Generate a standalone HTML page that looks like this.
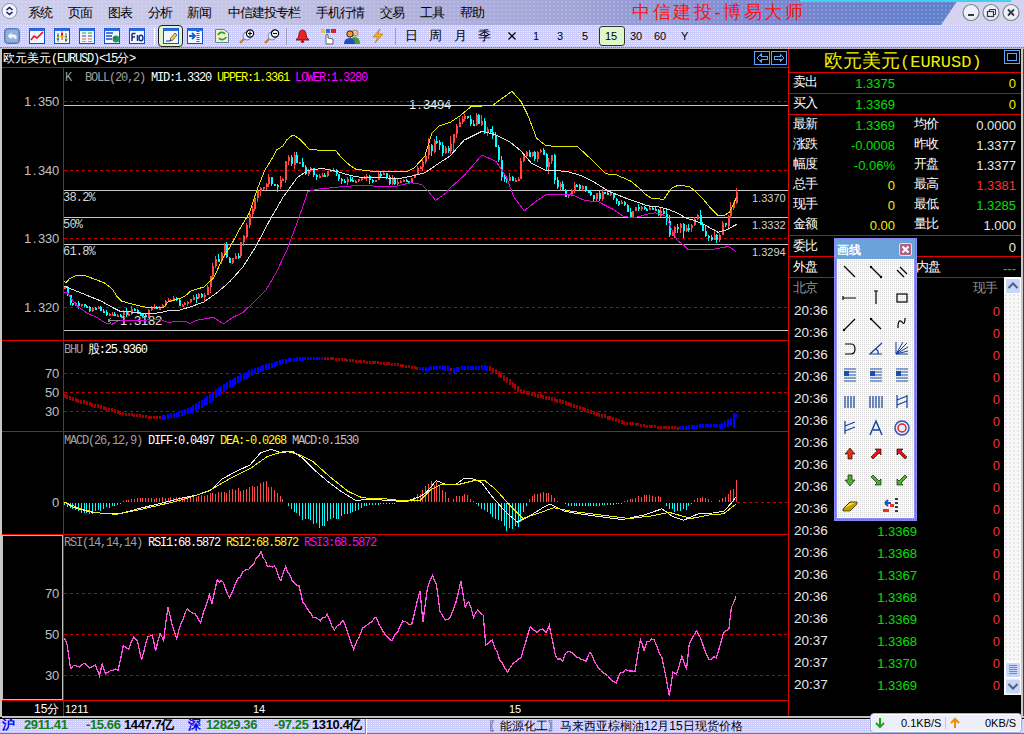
<!DOCTYPE html><html><head><meta charset="utf-8"><style>
*{margin:0;padding:0;box-sizing:border-box}
html,body{width:1024px;height:734px;overflow:hidden;background:#000;font-family:"Liberation Sans",sans-serif}
.a{position:absolute;white-space:nowrap;line-height:1}
.m{font-family:"Liberation Mono",monospace;font-size:12px;letter-spacing:-1.2px}
.s{font-family:"Liberation Sans",sans-serif}
</style></head><body><div class="a" style="left:0;top:0;width:1024px;height:25px;background:linear-gradient(90deg,#cdcdec 0px,#c4c4e6 250px,#b0b0dc 420px,#a0a4d6 576px,#7c88d0 760px,#6680cc 900px,#6080cc 960px)"></div>
<div class="a" style="left:0;top:0;width:1024px;height:25px;background-image:radial-gradient(circle,rgba(255,255,255,.35) 0.6px,transparent 0.9px);background-size:4px 4px;opacity:.7"></div>
<svg class="a" style="left:0;top:0" width="1024" height="25"><polygon points="958,0 1024,0 1024,25 941,25" fill="#d4d4f0"/><rect x="800" y="0" width="211" height="2" fill="#40d0f0"/></svg>
<div class="a" style="left:0;top:25px;width:1024px;height:22px;background:conic-gradient(from 90deg at 1px 1px,#cccccc 0 25%,#ccccff 0 75%,#ccffee 0) 0 0/2px 2px"></div>
<div class="a" style="left:0;top:47px;width:1024px;height:2px;background:#b8b8b8;border-top:1px dotted #808080"></div>
<div class="a" style="left:28px;top:6px;font-size:13px;letter-spacing:-1px;color:#000">系统</div>
<div class="a" style="left:68px;top:6px;font-size:13px;letter-spacing:-1px;color:#000">页面</div>
<div class="a" style="left:108px;top:6px;font-size:13px;letter-spacing:-1px;color:#000">图表</div>
<div class="a" style="left:148px;top:6px;font-size:13px;letter-spacing:-1px;color:#000">分析</div>
<div class="a" style="left:187px;top:6px;font-size:13px;letter-spacing:-1px;color:#000">新闻</div>
<div class="a" style="left:228px;top:6px;font-size:13px;letter-spacing:-1px;color:#000">中信建投专栏</div>
<div class="a" style="left:316px;top:6px;font-size:13px;letter-spacing:-1px;color:#000">手机行情</div>
<div class="a" style="left:380px;top:6px;font-size:13px;letter-spacing:-1px;color:#000">交易</div>
<div class="a" style="left:420px;top:6px;font-size:13px;letter-spacing:-1px;color:#000">工具</div>
<div class="a" style="left:460px;top:6px;font-size:13px;letter-spacing:-1px;color:#000">帮助</div>
<svg class="a" style="left:0;top:0" width="24" height="24"><circle cx="9.5" cy="11" r="7.5" fill="#f4f4ff" stroke="#8890a8" stroke-width="1"/><path d="M6.5 10 L9.5 7.5 L12.5 10 M6.5 12 L9.5 14.5 L12.5 12" fill="none" stroke="#102060" stroke-width="1.6"/></svg>
<div class="a" style="left:632px;top:3px;font-size:18px;color:#ff1010;letter-spacing:2.6px;font-family:'Liberation Serif',serif">中信建投-博易大师</div>
<svg class="a" style="left:961px;top:2px" width="20" height="21"><circle cx="10" cy="10.5" r="8" fill="#eef0f8" stroke="#7a7f90" stroke-width="1.2"/><rect x="7" y="12" width="6" height="2" fill="#303848"/></svg>
<svg class="a" style="left:981px;top:2px" width="20" height="21"><circle cx="10" cy="10.5" r="8" fill="#eef0f8" stroke="#7a7f90" stroke-width="1.2"/><rect x="6.5" y="9.5" width="6" height="5" fill="none" stroke="#303848" stroke-width="1.2"/><path d="M8.5 9.5 V7.5 H14.5 V12.5 H12.5" fill="none" stroke="#303848" stroke-width="1"/></svg>
<svg class="a" style="left:1001px;top:2px" width="20" height="21"><circle cx="10" cy="10.5" r="8" fill="#eef0f8" stroke="#7a7f90" stroke-width="1.2"/><path d="M7 7.5 L13 13.5 M13 7.5 L7 13.5" stroke="#303848" stroke-width="1.8"/></svg>
<svg class="a" style="left:4px;top:28px" width="17" height="16"><rect x="0.5" y="0.5" width="15" height="15" rx="3" fill="#7898c8" stroke="#5878b0"/><rect x="2" y="2" width="12" height="12" rx="2" fill="#90b0dc"/><path d="M3.5 8 L7.5 4.5 V6.5 H10 Q12.5 6.5 12.5 9 V11 H10.5 V9.5 H7.5 V11.5 Z" fill="#f0f4ff"/></svg>
<svg class="a" style="left:29px;top:28px" width="17" height="16"><rect x="0.5" y="0.5" width="15" height="15" fill="#f4f6ff" stroke="#1050d0"/><rect x="0.5" y="0.5" width="15" height="2.5" fill="#2c6ce0"/><polyline points="2,12 5,8 8,10 14,4" fill="none" stroke="#f01010" stroke-width="1.6"/></svg>
<svg class="a" style="left:54px;top:28px" width="17" height="16"><rect x="0.5" y="0.5" width="15" height="15" fill="#f4f6ff" stroke="#1050d0"/><rect x="0.5" y="0.5" width="15" height="2.5" fill="#2c6ce0"/><path d="M4 5 V14 M12 5 V14" stroke="#2070d0" stroke-width="1"/><rect x="3" y="7" width="2" height="5" fill="#2070d0"/><rect x="11" y="8" width="2" height="5" fill="#2070d0"/><path d="M8 3.5 V12" stroke="#f01010" stroke-width="1"/><rect x="7" y="5" width="2" height="4" fill="#f01010"/><polyline points="2,11 5,8.5 8,8 11,9 14,12" fill="none" stroke="#f0e000" stroke-width="1.2"/></svg>
<svg class="a" style="left:79px;top:28px" width="17" height="16"><rect x="0.5" y="0.5" width="15" height="15" fill="#f4f6ff" stroke="#1050d0"/><rect x="0.5" y="0.5" width="15" height="2.5" fill="#2c6ce0"/><path d="M3 5 H7 M9 5 H13" stroke="#30a030" stroke-width="1"/><path d="M3 8 H7 M9 8 H13" stroke="#2050c0" stroke-width="1"/><path d="M3 11 H7 M9 11 H13" stroke="#f06020" stroke-width="1"/><path d="M3 13.5 H7 M9 13.5 H13" stroke="#80a0d0" stroke-width="1"/></svg>
<svg class="a" style="left:104px;top:28px" width="17" height="16"><rect x="0.5" y="0.5" width="15" height="15" fill="#f4f6ff" stroke="#1050d0"/><rect x="0.5" y="0.5" width="15" height="2.5" fill="#2c6ce0"/><path d="M2 5 H9 M2 8 H8 M2 11 H8" stroke="#2050c0" stroke-width="1.6"/><circle cx="12" cy="11" r="3.5" fill="#20a040"/><circle cx="11" cy="10" r="1.5" fill="#2060d0"/></svg>
<svg class="a" style="left:129px;top:28px" width="17" height="16"><rect x="0.5" y="0.5" width="15" height="15" fill="#f4f6ff" stroke="#1050d0"/><rect x="0.5" y="0.5" width="15" height="2.5" fill="#2c6ce0"/><path d="M3 5.5 V13 M3 5.5 H6.5 M3 9 H6" stroke="#103080" stroke-width="1.5" fill="none"/><path d="M8.5 7 V13" stroke="#103080" stroke-width="1.5"/><ellipse cx="12" cy="10" rx="2" ry="2.8" fill="none" stroke="#103080" stroke-width="1.4"/></svg>
<div class="a" style="left:154px;top:28px;width:1px;height:17px;background:#a0a0b8;border-right:1px solid #fff"></div>
<div class="a" style="left:158px;top:25px;width:25px;height:22px;background:#dff5cc;border:1.5px solid #202020;border-radius:4px"></div>
<svg class="a" style="left:163px;top:28px" width="17" height="16"><rect x="0.5" y="0.5" width="15" height="15" fill="#f4f6ff" stroke="#1050d0"/><rect x="0.5" y="0.5" width="15" height="2.5" fill="#2c6ce0"/><path d="M3 13 H7 L13 6" fill="none" stroke="#1030a0" stroke-width="1.2"/><path d="M7 11 L12 5 L14 7 L9 13 Z" fill="#f0d030" stroke="#303030" stroke-width=".6"/></svg>
<svg class="a" style="left:187px;top:28px" width="17" height="16"><rect x="0.5" y="0.5" width="15" height="15" fill="#f4f6ff" stroke="#1050d0"/><rect x="0.5" y="0.5" width="15" height="2.5" fill="#2c6ce0"/><path d="M2 8 H8 M5 5 L8 8 L5 11" fill="none" stroke="#1060d0" stroke-width="1.8"/><path d="M11 3 V15" stroke="#e02020" stroke-width="3" stroke-dasharray="1 1"/></svg>
<svg class="a" style="left:214px;top:28px" width="16" height="16"><path d="M1.5 1.5 H10 L14.5 5 V14.5 H1.5 Z" fill="#f4f0c0" stroke="#6080b0"/><path d="M4 7 A4 4 0 0 1 11 6 M12 9 A4 4 0 0 1 5 10" fill="none" stroke="#20a040" stroke-width="1.8"/></svg>
<svg class="a" style="left:238px;top:28px" width="17" height="17"><path d="M2 15 L7 10" stroke="#d08020" stroke-width="2.4"/><circle cx="9" cy="8" r="4" fill="#d8ecff" stroke="#8090a0"/><circle cx="12" cy="5.5" r="3.6" fill="#fff" stroke="#000" stroke-width="1.2"/><path d="M12 3.5 V7.5 M10 5.5 H14" stroke="#000" stroke-width="1.2"/></svg>
<svg class="a" style="left:263px;top:28px" width="17" height="17"><path d="M2 15 L7 10" stroke="#d08020" stroke-width="2.4"/><circle cx="9" cy="8" r="4" fill="#d8ecff" stroke="#8090a0"/><circle cx="12" cy="5.5" r="3.6" fill="#fff" stroke="#000" stroke-width="1.2"/><path d="M10 5.5 H14" stroke="#000" stroke-width="1.2"/></svg>
<div class="a" style="left:286px;top:28px;width:1px;height:17px;background:#fff;border-left:1px solid #a0a0b8"></div>
<svg class="a" style="left:294px;top:28px" width="17" height="16"><path d="M8.5 2 C5 2 5 6 4.5 9 L2 12 H15 L12.5 9 C12 6 12 2 8.5 2 Z" fill="#f02020" stroke="#600" stroke-width=".8"/><circle cx="8.5" cy="13.5" r="1.6" fill="#c00"/></svg>
<svg class="a" style="left:320px;top:28px" width="17" height="17"><rect x="1" y="1" width="4" height="4" fill="#f0c040"/><rect x="6" y="1" width="4" height="4" fill="#3070d0"/><rect x="11" y="1" width="5" height="4" fill="#e02020"/><path d="M6 16 V7 Q7 5 8 7 V10 L13 11 V16 Z" fill="#fff" stroke="#404040" stroke-width=".8"/></svg>
<svg class="a" style="left:344px;top:28px" width="17" height="17"><circle cx="11" cy="5" r="3" fill="#f0c080" stroke="#806040" stroke-width=".6"/><path d="M6 16 Q6 9 11 9 Q16 9 16 16 Z" fill="#40a040"/><circle cx="6" cy="6" r="3.2" fill="#f0a030" stroke="#202020" stroke-width="1"/><path d="M0 16 Q0 10 6 10 Q11 10 11 16 Z" fill="#2050c0"/></svg>
<svg class="a" style="left:370px;top:28px" width="16" height="16"><path d="M10 1 L3 9 H8 L5 15 L13 6 H8 Z" fill="#f0b020" stroke="#c06000" stroke-width=".6"/></svg>
<div class="a" style="left:395px;top:28px;width:1px;height:17px;background:#fff;border-left:1px solid #a0a0b8"></div>
<div class="a" style="left:599px;top:26px;width:26px;height:20px;background:#e0f8c8;border:1px solid #303030;border-radius:3px"></div>
<div class="a" style="left:405px;top:29px;font-size:13px;color:#000">日</div>
<div class="a" style="left:429px;top:29px;font-size:13px;color:#000">周</div>
<div class="a" style="left:454px;top:29px;font-size:13px;color:#000">月</div>
<div class="a" style="left:478px;top:29px;font-size:13px;color:#000">季</div>
<svg class="a" style="left:507px;top:31px" width="10" height="10"><path d="M1.5 1.5 L8.5 8.5 M8.5 1.5 L1.5 8.5" stroke="#000" stroke-width="1.3"/></svg>
<div class="a" style="left:533px;top:31px;font-size:11px;color:#000">1</div>
<div class="a" style="left:557px;top:31px;font-size:11px;color:#000">3</div>
<div class="a" style="left:582px;top:31px;font-size:11px;color:#000">5</div>
<div class="a" style="left:605px;top:31px;font-size:11px;color:#000">15</div>
<div class="a" style="left:630px;top:31px;font-size:11px;color:#000">30</div>
<div class="a" style="left:654px;top:31px;font-size:11px;color:#000">60</div>
<div class="a" style="left:681px;top:31px;font-size:11px;color:#000">Y</div>
<div class="a" style="left:0;top:49px;width:2px;height:668px;background:#c8c8c8"></div>
<div class="a" style="left:1021px;top:49px;width:3px;height:668px;background:#c8c8c8;border-right:1px solid #404040"></div>
<div class="a" style="left:2px;top:716px;width:1022px;height:2px;background:#c0c0c0"></div>
<div class="a" style="left:409px;top:96px;color:#f0f0f0"><span style="display:inline-block;width:7px;text-align:center;font-family:'Liberation Sans',sans-serif;font-size:13px">1</span><span style="display:inline-block;width:7px;text-align:center;font-family:'Liberation Sans',sans-serif;font-size:13px">.</span><span style="display:inline-block;width:7px;text-align:center;font-family:'Liberation Sans',sans-serif;font-size:13px">3</span><span style="display:inline-block;width:7px;text-align:center;font-family:'Liberation Sans',sans-serif;font-size:13px">4</span><span style="display:inline-block;width:7px;text-align:center;font-family:'Liberation Sans',sans-serif;font-size:13px">9</span><span style="display:inline-block;width:7px;text-align:center;font-family:'Liberation Sans',sans-serif;font-size:13px">4</span></div>
<div class="a" style="left:120px;top:312px;color:#e0e0e0"><span style="display:inline-block;width:7px;text-align:center;font-family:'Liberation Sans',sans-serif;font-size:13px">1</span><span style="display:inline-block;width:7px;text-align:center;font-family:'Liberation Sans',sans-serif;font-size:13px">.</span><span style="display:inline-block;width:7px;text-align:center;font-family:'Liberation Sans',sans-serif;font-size:13px">3</span><span style="display:inline-block;width:7px;text-align:center;font-family:'Liberation Sans',sans-serif;font-size:13px">1</span><span style="display:inline-block;width:7px;text-align:center;font-family:'Liberation Sans',sans-serif;font-size:13px">8</span><span style="display:inline-block;width:7px;text-align:center;font-family:'Liberation Sans',sans-serif;font-size:13px">2</span></div>
<svg class="a" style="left:0;top:0" width="1024" height="734" shape-rendering="crispEdges"><line x1="2" y1="67.5" x2="788" y2="67.5" stroke="#e00000" stroke-width="1"/><line x1="2" y1="340.5" x2="788" y2="340.5" stroke="#e00000" stroke-width="1"/><line x1="2" y1="431.5" x2="788" y2="431.5" stroke="#e00000" stroke-width="1"/><line x1="2" y1="534.5" x2="788" y2="534.5" stroke="#e00000" stroke-width="1"/><line x1="2" y1="700.5" x2="788" y2="700.5" stroke="#e00000" stroke-width="1"/><line x1="63.5" y1="67" x2="63.5" y2="716" stroke="#e00000"/><line x1="788.5" y1="49" x2="788.5" y2="716" stroke="#e00000"/><rect x="2.5" y="535.5" width="60" height="164" fill="none" stroke="#c0c0c0"/><line x1="64" y1="101.5" x2="788" y2="101.5" stroke="#c00000" stroke-width="1" stroke-dasharray="3 3"/><line x1="64" y1="170.5" x2="788" y2="170.5" stroke="#c00000" stroke-width="1" stroke-dasharray="3 3"/><line x1="64" y1="238.5" x2="788" y2="238.5" stroke="#c00000" stroke-width="1" stroke-dasharray="3 3"/><line x1="64" y1="307.5" x2="788" y2="307.5" stroke="#c00000" stroke-width="1" stroke-dasharray="3 3"/><line x1="64" y1="373.5" x2="788" y2="373.5" stroke="#c00000" stroke-width="1" stroke-dasharray="3 3"/><line x1="64" y1="392.5" x2="788" y2="392.5" stroke="#c00000" stroke-width="1" stroke-dasharray="3 3"/><line x1="64" y1="411.5" x2="788" y2="411.5" stroke="#c00000" stroke-width="1" stroke-dasharray="3 3"/><line x1="737" y1="502.5" x2="788" y2="502.5" stroke="#c00000" stroke-width="1" stroke-dasharray="3 3"/><line x1="64" y1="593.5" x2="788" y2="593.5" stroke="#c00000" stroke-width="1" stroke-dasharray="3 3"/><line x1="64" y1="634.5" x2="788" y2="634.5" stroke="#c00000" stroke-width="1" stroke-dasharray="3 3"/><line x1="64" y1="675.5" x2="788" y2="675.5" stroke="#c00000" stroke-width="1" stroke-dasharray="3 3"/><line x1="64" y1="105.5" x2="788" y2="105.5" stroke="#c8c8c8" stroke-width="1"/><line x1="64" y1="190.5" x2="788" y2="190.5" stroke="#c8c8c8" stroke-width="1"/><line x1="64" y1="217.5" x2="788" y2="217.5" stroke="#c8c8c8" stroke-width="1"/><line x1="64" y1="244.5" x2="788" y2="244.5" stroke="#c8c8c8" stroke-width="1"/><line x1="64" y1="330.5" x2="788" y2="330.5" stroke="#c8c8c8" stroke-width="1"/><rect x="64" y="287" width="1" height="2" fill="#ff4848"/><rect x="64" y="287" width="2" height="2" fill="#ff4848"/><rect x="67" y="286" width="1" height="10" fill="#00ffff"/><rect x="67" y="287" width="2" height="8" fill="#00ffff"/><rect x="70" y="295" width="1" height="10" fill="#00ffff"/><rect x="70" y="295" width="2" height="8" fill="#00ffff"/><rect x="72" y="303" width="1" height="3" fill="#00ffff"/><rect x="72" y="303" width="2" height="2" fill="#00ffff"/><rect x="75" y="302" width="1" height="4" fill="#ff4848"/><rect x="75" y="303" width="2" height="2" fill="#ff4848"/><rect x="78" y="301" width="1" height="8" fill="#00ffff"/><rect x="78" y="303" width="2" height="3" fill="#00ffff"/><rect x="81" y="304" width="1" height="3" fill="#ff4848"/><rect x="81" y="304" width="2" height="2" fill="#ff4848"/><rect x="84" y="304" width="1" height="3" fill="#00ffff"/><rect x="84" y="304" width="2" height="2" fill="#00ffff"/><rect x="86" y="305" width="1" height="3" fill="#00ffff"/><rect x="86" y="306" width="2" height="2" fill="#00ffff"/><rect x="89" y="306" width="1" height="6" fill="#00ffff"/><rect x="89" y="307" width="2" height="4" fill="#00ffff"/><rect x="92" y="307" width="1" height="5" fill="#ff4848"/><rect x="92" y="308" width="2" height="3" fill="#ff4848"/><rect x="95" y="307" width="1" height="1" fill="#00ffff"/><rect x="95" y="308" width="2" height="2" fill="#00ffff"/><rect x="98" y="306" width="1" height="2" fill="#ff4848"/><rect x="98" y="307" width="2" height="2" fill="#ff4848"/><rect x="100" y="306" width="1" height="5" fill="#00ffff"/><rect x="100" y="307" width="2" height="4" fill="#00ffff"/><rect x="103" y="309" width="1" height="3" fill="#00ffff"/><rect x="103" y="311" width="2" height="2" fill="#00ffff"/><rect x="106" y="310" width="1" height="6" fill="#00ffff"/><rect x="106" y="312" width="2" height="3" fill="#00ffff"/><rect x="109" y="313" width="1" height="3" fill="#ff4848"/><rect x="109" y="314" width="2" height="2" fill="#ff4848"/><rect x="112" y="312" width="1" height="4" fill="#ff4848"/><rect x="112" y="314" width="2" height="2" fill="#ff4848"/><rect x="114" y="312" width="1" height="4" fill="#00ffff"/><rect x="114" y="314" width="2" height="2" fill="#00ffff"/><rect x="117" y="314" width="1" height="2" fill="#ff4848"/><rect x="117" y="315" width="2" height="2" fill="#ff4848"/><rect x="120" y="314" width="1" height="2" fill="#00ffff"/><rect x="120" y="315" width="2" height="2" fill="#00ffff"/><rect x="123" y="310" width="1" height="6" fill="#ff4848"/><rect x="123" y="311" width="2" height="4" fill="#ff4848"/><rect x="126" y="308" width="1" height="9" fill="#00ffff"/><rect x="126" y="311" width="2" height="4" fill="#00ffff"/><rect x="128" y="312" width="1" height="3" fill="#ff4848"/><rect x="128" y="314" width="2" height="2" fill="#ff4848"/><rect x="131" y="306" width="1" height="9" fill="#ff4848"/><rect x="131" y="309" width="2" height="5" fill="#ff4848"/><rect x="134" y="308" width="1" height="3" fill="#00ffff"/><rect x="134" y="309" width="2" height="2" fill="#00ffff"/><rect x="137" y="309" width="1" height="5" fill="#00ffff"/><rect x="137" y="310" width="2" height="4" fill="#00ffff"/><rect x="140" y="312" width="1" height="4" fill="#00ffff"/><rect x="140" y="314" width="2" height="2" fill="#00ffff"/><rect x="142" y="314" width="1" height="3" fill="#00ffff"/><rect x="142" y="314" width="2" height="2" fill="#00ffff"/><rect x="145" y="313" width="1" height="4" fill="#00ffff"/><rect x="145" y="315" width="2" height="2" fill="#00ffff"/><rect x="148" y="309" width="1" height="9" fill="#ff4848"/><rect x="148" y="310" width="2" height="7" fill="#ff4848"/><rect x="151" y="306" width="1" height="5" fill="#ff4848"/><rect x="151" y="307" width="2" height="3" fill="#ff4848"/><rect x="154" y="304" width="1" height="3" fill="#ff4848"/><rect x="154" y="307" width="2" height="2" fill="#ff4848"/><rect x="156" y="306" width="1" height="3" fill="#00ffff"/><rect x="156" y="307" width="2" height="2" fill="#00ffff"/><rect x="159" y="306" width="1" height="3" fill="#ff4848"/><rect x="159" y="308" width="2" height="2" fill="#ff4848"/><rect x="162" y="304" width="1" height="4" fill="#ff4848"/><rect x="162" y="305" width="2" height="3" fill="#ff4848"/><rect x="165" y="300" width="1" height="7" fill="#ff4848"/><rect x="165" y="301" width="2" height="4" fill="#ff4848"/><rect x="168" y="298" width="1" height="3" fill="#ff4848"/><rect x="168" y="300" width="2" height="2" fill="#ff4848"/><rect x="170" y="299" width="1" height="3" fill="#ff4848"/><rect x="170" y="300" width="2" height="2" fill="#ff4848"/><rect x="173" y="296" width="1" height="5" fill="#ff4848"/><rect x="173" y="298" width="2" height="2" fill="#ff4848"/><rect x="176" y="297" width="1" height="4" fill="#00ffff"/><rect x="176" y="298" width="2" height="2" fill="#00ffff"/><rect x="179" y="299" width="1" height="7" fill="#00ffff"/><rect x="179" y="300" width="2" height="6" fill="#00ffff"/><rect x="182" y="304" width="1" height="1" fill="#ff4848"/><rect x="182" y="305" width="2" height="2" fill="#ff4848"/><rect x="184" y="302" width="1" height="3" fill="#ff4848"/><rect x="184" y="303" width="2" height="2" fill="#ff4848"/><rect x="187" y="301" width="1" height="5" fill="#ff4848"/><rect x="187" y="302" width="2" height="2" fill="#ff4848"/><rect x="190" y="299" width="1" height="4" fill="#ff4848"/><rect x="190" y="299" width="2" height="3" fill="#ff4848"/><rect x="193" y="295" width="1" height="5" fill="#ff4848"/><rect x="193" y="297" width="2" height="3" fill="#ff4848"/><rect x="196" y="294" width="1" height="9" fill="#00ffff"/><rect x="196" y="297" width="2" height="2" fill="#00ffff"/><rect x="198" y="293" width="1" height="6" fill="#ff4848"/><rect x="198" y="294" width="2" height="4" fill="#ff4848"/><rect x="201" y="293" width="1" height="5" fill="#00ffff"/><rect x="201" y="294" width="2" height="3" fill="#00ffff"/><rect x="204" y="293" width="1" height="9" fill="#ff4848"/><rect x="204" y="295" width="2" height="2" fill="#ff4848"/><rect x="207" y="285" width="1" height="10" fill="#ff4848"/><rect x="207" y="287" width="2" height="8" fill="#ff4848"/><rect x="210" y="276" width="1" height="17" fill="#ff4848"/><rect x="210" y="276" width="2" height="11" fill="#ff4848"/><rect x="212" y="263" width="1" height="16" fill="#ff4848"/><rect x="212" y="266" width="2" height="10" fill="#ff4848"/><rect x="215" y="256" width="1" height="12" fill="#ff4848"/><rect x="215" y="259" width="2" height="7" fill="#ff4848"/><rect x="218" y="254" width="1" height="8" fill="#00ffff"/><rect x="218" y="259" width="2" height="3" fill="#00ffff"/><rect x="221" y="252" width="1" height="12" fill="#ff4848"/><rect x="221" y="253" width="2" height="8" fill="#ff4848"/><rect x="224" y="243" width="1" height="14" fill="#ff4848"/><rect x="224" y="245" width="2" height="8" fill="#ff4848"/><rect x="226" y="242" width="1" height="16" fill="#00ffff"/><rect x="226" y="245" width="2" height="12" fill="#00ffff"/><rect x="229" y="257" width="1" height="6" fill="#00ffff"/><rect x="229" y="258" width="2" height="5" fill="#00ffff"/><rect x="232" y="258" width="1" height="6" fill="#ff4848"/><rect x="232" y="258" width="2" height="5" fill="#ff4848"/><rect x="235" y="253" width="1" height="6" fill="#ff4848"/><rect x="235" y="256" width="2" height="3" fill="#ff4848"/><rect x="238" y="253" width="1" height="6" fill="#00ffff"/><rect x="238" y="256" width="2" height="2" fill="#00ffff"/><rect x="240" y="242" width="1" height="16" fill="#ff4848"/><rect x="240" y="242" width="2" height="14" fill="#ff4848"/><rect x="243" y="235" width="1" height="11" fill="#ff4848"/><rect x="243" y="236" width="2" height="6" fill="#ff4848"/><rect x="246" y="223" width="1" height="15" fill="#ff4848"/><rect x="246" y="225" width="2" height="12" fill="#ff4848"/><rect x="249" y="211" width="1" height="17" fill="#ff4848"/><rect x="249" y="214" width="2" height="11" fill="#ff4848"/><rect x="252" y="206" width="1" height="11" fill="#ff4848"/><rect x="252" y="209" width="2" height="5" fill="#ff4848"/><rect x="254" y="195" width="1" height="16" fill="#ff4848"/><rect x="254" y="198" width="2" height="11" fill="#ff4848"/><rect x="257" y="189" width="1" height="13" fill="#ff4848"/><rect x="257" y="191" width="2" height="7" fill="#ff4848"/><rect x="260" y="187" width="1" height="9" fill="#ff4848"/><rect x="260" y="188" width="2" height="3" fill="#ff4848"/><rect x="263" y="187" width="1" height="3" fill="#ff4848"/><rect x="263" y="187" width="2" height="2" fill="#ff4848"/><rect x="266" y="183" width="1" height="7" fill="#ff4848"/><rect x="266" y="184" width="2" height="3" fill="#ff4848"/><rect x="268" y="174" width="1" height="13" fill="#ff4848"/><rect x="268" y="177" width="2" height="7" fill="#ff4848"/><rect x="271" y="177" width="1" height="9" fill="#00ffff"/><rect x="271" y="177" width="2" height="7" fill="#00ffff"/><rect x="274" y="184" width="1" height="1" fill="#00ffff"/><rect x="274" y="184" width="2" height="2" fill="#00ffff"/><rect x="277" y="184" width="1" height="8" fill="#00ffff"/><rect x="277" y="185" width="2" height="2" fill="#00ffff"/><rect x="280" y="176" width="1" height="13" fill="#ff4848"/><rect x="280" y="180" width="2" height="7" fill="#ff4848"/><rect x="282" y="178" width="1" height="2" fill="#ff4848"/><rect x="282" y="179" width="2" height="2" fill="#ff4848"/><rect x="285" y="161" width="1" height="22" fill="#ff4848"/><rect x="285" y="161" width="2" height="19" fill="#ff4848"/><rect x="288" y="155" width="1" height="10" fill="#ff4848"/><rect x="288" y="157" width="2" height="4" fill="#ff4848"/><rect x="291" y="155" width="1" height="11" fill="#00ffff"/><rect x="291" y="157" width="2" height="7" fill="#00ffff"/><rect x="294" y="152" width="1" height="17" fill="#ff4848"/><rect x="294" y="155" width="2" height="10" fill="#ff4848"/><rect x="296" y="152" width="1" height="11" fill="#00ffff"/><rect x="296" y="155" width="2" height="8" fill="#00ffff"/><rect x="299" y="162" width="1" height="2" fill="#ff4848"/><rect x="299" y="162" width="2" height="2" fill="#ff4848"/><rect x="302" y="158" width="1" height="9" fill="#00ffff"/><rect x="302" y="162" width="2" height="5" fill="#00ffff"/><rect x="305" y="165" width="1" height="10" fill="#00ffff"/><rect x="305" y="167" width="2" height="7" fill="#00ffff"/><rect x="308" y="169" width="1" height="7" fill="#ff4848"/><rect x="308" y="170" width="2" height="4" fill="#ff4848"/><rect x="310" y="167" width="1" height="5" fill="#ff4848"/><rect x="310" y="168" width="2" height="2" fill="#ff4848"/><rect x="313" y="168" width="1" height="9" fill="#00ffff"/><rect x="313" y="168" width="2" height="7" fill="#00ffff"/><rect x="316" y="174" width="1" height="6" fill="#00ffff"/><rect x="316" y="175" width="2" height="2" fill="#00ffff"/><rect x="319" y="174" width="1" height="4" fill="#ff4848"/><rect x="319" y="176" width="2" height="2" fill="#ff4848"/><rect x="322" y="173" width="1" height="4" fill="#ff4848"/><rect x="322" y="175" width="2" height="2" fill="#ff4848"/><rect x="324" y="173" width="1" height="4" fill="#00ffff"/><rect x="324" y="175" width="2" height="2" fill="#00ffff"/><rect x="327" y="171" width="1" height="6" fill="#ff4848"/><rect x="327" y="171" width="2" height="5" fill="#ff4848"/><rect x="330" y="169" width="1" height="2" fill="#ff4848"/><rect x="330" y="170" width="2" height="2" fill="#ff4848"/><rect x="333" y="168" width="1" height="2" fill="#ff4848"/><rect x="333" y="170" width="2" height="2" fill="#ff4848"/><rect x="336" y="169" width="1" height="7" fill="#00ffff"/><rect x="336" y="170" width="2" height="4" fill="#00ffff"/><rect x="338" y="174" width="1" height="7" fill="#00ffff"/><rect x="338" y="174" width="2" height="5" fill="#00ffff"/><rect x="341" y="178" width="1" height="6" fill="#00ffff"/><rect x="341" y="179" width="2" height="2" fill="#00ffff"/><rect x="344" y="179" width="1" height="4" fill="#00ffff"/><rect x="344" y="181" width="2" height="2" fill="#00ffff"/><rect x="347" y="177" width="1" height="8" fill="#ff4848"/><rect x="347" y="179" width="2" height="3" fill="#ff4848"/><rect x="350" y="176" width="1" height="6" fill="#00ffff"/><rect x="350" y="179" width="2" height="2" fill="#00ffff"/><rect x="352" y="177" width="1" height="4" fill="#00ffff"/><rect x="352" y="180" width="2" height="2" fill="#00ffff"/><rect x="355" y="180" width="1" height="3" fill="#ff4848"/><rect x="355" y="181" width="2" height="2" fill="#ff4848"/><rect x="358" y="179" width="1" height="3" fill="#ff4848"/><rect x="358" y="179" width="2" height="2" fill="#ff4848"/><rect x="361" y="178" width="1" height="3" fill="#ff4848"/><rect x="361" y="178" width="2" height="2" fill="#ff4848"/><rect x="364" y="176" width="1" height="3" fill="#ff4848"/><rect x="364" y="177" width="2" height="2" fill="#ff4848"/><rect x="366" y="174" width="1" height="7" fill="#ff4848"/><rect x="366" y="176" width="2" height="2" fill="#ff4848"/><rect x="369" y="175" width="1" height="9" fill="#00ffff"/><rect x="369" y="176" width="2" height="4" fill="#00ffff"/><rect x="372" y="179" width="1" height="4" fill="#00ffff"/><rect x="372" y="180" width="2" height="2" fill="#00ffff"/><rect x="375" y="180" width="1" height="1" fill="#ff4848"/><rect x="375" y="180" width="2" height="2" fill="#ff4848"/><rect x="378" y="172" width="1" height="8" fill="#ff4848"/><rect x="378" y="174" width="2" height="6" fill="#ff4848"/><rect x="380" y="172" width="1" height="5" fill="#00ffff"/><rect x="380" y="174" width="2" height="2" fill="#00ffff"/><rect x="383" y="172" width="1" height="3" fill="#ff4848"/><rect x="383" y="173" width="2" height="2" fill="#ff4848"/><rect x="386" y="173" width="1" height="6" fill="#00ffff"/><rect x="386" y="173" width="2" height="4" fill="#00ffff"/><rect x="389" y="175" width="1" height="10" fill="#00ffff"/><rect x="389" y="177" width="2" height="7" fill="#00ffff"/><rect x="392" y="175" width="1" height="10" fill="#ff4848"/><rect x="392" y="178" width="2" height="6" fill="#ff4848"/><rect x="394" y="177" width="1" height="8" fill="#00ffff"/><rect x="394" y="178" width="2" height="6" fill="#00ffff"/><rect x="397" y="179" width="1" height="6" fill="#ff4848"/><rect x="397" y="182" width="2" height="2" fill="#ff4848"/><rect x="400" y="180" width="1" height="3" fill="#ff4848"/><rect x="400" y="181" width="2" height="2" fill="#ff4848"/><rect x="403" y="179" width="1" height="3" fill="#ff4848"/><rect x="403" y="180" width="2" height="2" fill="#ff4848"/><rect x="406" y="179" width="1" height="2" fill="#00ffff"/><rect x="406" y="180" width="2" height="2" fill="#00ffff"/><rect x="408" y="181" width="1" height="2" fill="#00ffff"/><rect x="408" y="181" width="2" height="2" fill="#00ffff"/><rect x="411" y="178" width="1" height="4" fill="#ff4848"/><rect x="411" y="178" width="2" height="4" fill="#ff4848"/><rect x="414" y="174" width="1" height="4" fill="#ff4848"/><rect x="414" y="174" width="2" height="4" fill="#ff4848"/><rect x="417" y="166" width="1" height="9" fill="#ff4848"/><rect x="417" y="168" width="2" height="6" fill="#ff4848"/><rect x="420" y="166" width="1" height="3" fill="#ff4848"/><rect x="420" y="167" width="2" height="2" fill="#ff4848"/><rect x="422" y="159" width="1" height="12" fill="#ff4848"/><rect x="422" y="162" width="2" height="5" fill="#ff4848"/><rect x="425" y="153" width="1" height="11" fill="#ff4848"/><rect x="425" y="156" width="2" height="6" fill="#ff4848"/><rect x="428" y="138" width="1" height="21" fill="#ff4848"/><rect x="428" y="145" width="2" height="10" fill="#ff4848"/><rect x="431" y="144" width="1" height="12" fill="#00ffff"/><rect x="431" y="145" width="2" height="6" fill="#00ffff"/><rect x="434" y="139" width="1" height="14" fill="#ff4848"/><rect x="434" y="141" width="2" height="11" fill="#ff4848"/><rect x="436" y="136" width="1" height="8" fill="#00ffff"/><rect x="436" y="141" width="2" height="2" fill="#00ffff"/><rect x="439" y="140" width="1" height="10" fill="#00ffff"/><rect x="439" y="142" width="2" height="3" fill="#00ffff"/><rect x="442" y="142" width="1" height="14" fill="#00ffff"/><rect x="442" y="145" width="2" height="8" fill="#00ffff"/><rect x="445" y="146" width="1" height="8" fill="#ff4848"/><rect x="445" y="148" width="2" height="5" fill="#ff4848"/><rect x="448" y="146" width="1" height="7" fill="#00ffff"/><rect x="448" y="148" width="2" height="3" fill="#00ffff"/><rect x="450" y="136" width="1" height="18" fill="#ff4848"/><rect x="450" y="144" width="2" height="7" fill="#ff4848"/><rect x="453" y="134" width="1" height="17" fill="#ff4848"/><rect x="453" y="134" width="2" height="9" fill="#ff4848"/><rect x="456" y="124" width="1" height="14" fill="#ff4848"/><rect x="456" y="126" width="2" height="8" fill="#ff4848"/><rect x="459" y="118" width="1" height="9" fill="#ff4848"/><rect x="459" y="122" width="2" height="5" fill="#ff4848"/><rect x="462" y="116" width="1" height="8" fill="#ff4848"/><rect x="462" y="119" width="2" height="3" fill="#ff4848"/><rect x="464" y="114" width="1" height="7" fill="#ff4848"/><rect x="464" y="116" width="2" height="3" fill="#ff4848"/><rect x="467" y="116" width="1" height="3" fill="#00ffff"/><rect x="467" y="116" width="2" height="2" fill="#00ffff"/><rect x="470" y="115" width="1" height="11" fill="#00ffff"/><rect x="470" y="119" width="2" height="5" fill="#00ffff"/><rect x="473" y="120" width="1" height="6" fill="#00ffff"/><rect x="473" y="124" width="2" height="2" fill="#00ffff"/><rect x="476" y="113" width="1" height="13" fill="#ff4848"/><rect x="476" y="115" width="2" height="10" fill="#ff4848"/><rect x="478" y="114" width="1" height="10" fill="#00ffff"/><rect x="478" y="115" width="2" height="9" fill="#00ffff"/><rect x="481" y="115" width="1" height="11" fill="#ff4848"/><rect x="481" y="121" width="2" height="4" fill="#ff4848"/><rect x="484" y="118" width="1" height="16" fill="#00ffff"/><rect x="484" y="121" width="2" height="12" fill="#00ffff"/><rect x="487" y="127" width="1" height="9" fill="#ff4848"/><rect x="487" y="129" width="2" height="4" fill="#ff4848"/><rect x="490" y="129" width="1" height="5" fill="#00ffff"/><rect x="490" y="129" width="2" height="3" fill="#00ffff"/><rect x="492" y="126" width="1" height="13" fill="#00ffff"/><rect x="492" y="132" width="2" height="4" fill="#00ffff"/><rect x="495" y="132" width="1" height="15" fill="#00ffff"/><rect x="495" y="136" width="2" height="11" fill="#00ffff"/><rect x="498" y="145" width="1" height="17" fill="#00ffff"/><rect x="498" y="147" width="2" height="13" fill="#00ffff"/><rect x="501" y="156" width="1" height="25" fill="#00ffff"/><rect x="501" y="160" width="2" height="17" fill="#00ffff"/><rect x="504" y="174" width="1" height="8" fill="#00ffff"/><rect x="504" y="177" width="2" height="2" fill="#00ffff"/><rect x="506" y="178" width="1" height="5" fill="#00ffff"/><rect x="506" y="178" width="2" height="3" fill="#00ffff"/><rect x="509" y="173" width="1" height="8" fill="#ff4848"/><rect x="509" y="177" width="2" height="4" fill="#ff4848"/><rect x="512" y="176" width="1" height="5" fill="#00ffff"/><rect x="512" y="177" width="2" height="4" fill="#00ffff"/><rect x="515" y="178" width="1" height="4" fill="#ff4848"/><rect x="515" y="180" width="2" height="2" fill="#ff4848"/><rect x="518" y="177" width="1" height="3" fill="#ff4848"/><rect x="518" y="179" width="2" height="2" fill="#ff4848"/><rect x="520" y="158" width="1" height="21" fill="#ff4848"/><rect x="520" y="161" width="2" height="18" fill="#ff4848"/><rect x="523" y="155" width="1" height="7" fill="#ff4848"/><rect x="523" y="155" width="2" height="6" fill="#ff4848"/><rect x="526" y="151" width="1" height="6" fill="#ff4848"/><rect x="526" y="152" width="2" height="4" fill="#ff4848"/><rect x="529" y="150" width="1" height="7" fill="#00ffff"/><rect x="529" y="152" width="2" height="5" fill="#00ffff"/><rect x="532" y="152" width="1" height="5" fill="#ff4848"/><rect x="532" y="152" width="2" height="4" fill="#ff4848"/><rect x="534" y="151" width="1" height="10" fill="#00ffff"/><rect x="534" y="152" width="2" height="7" fill="#00ffff"/><rect x="537" y="151" width="1" height="11" fill="#ff4848"/><rect x="537" y="152" width="2" height="7" fill="#ff4848"/><rect x="540" y="149" width="1" height="4" fill="#ff4848"/><rect x="540" y="150" width="2" height="2" fill="#ff4848"/><rect x="543" y="148" width="1" height="7" fill="#00ffff"/><rect x="543" y="150" width="2" height="5" fill="#00ffff"/><rect x="546" y="153" width="1" height="17" fill="#00ffff"/><rect x="546" y="154" width="2" height="13" fill="#00ffff"/><rect x="548" y="158" width="1" height="16" fill="#ff4848"/><rect x="548" y="162" width="2" height="5" fill="#ff4848"/><rect x="551" y="155" width="1" height="9" fill="#ff4848"/><rect x="551" y="155" width="2" height="6" fill="#ff4848"/><rect x="554" y="154" width="1" height="30" fill="#00ffff"/><rect x="554" y="155" width="2" height="25" fill="#00ffff"/><rect x="557" y="177" width="1" height="12" fill="#00ffff"/><rect x="557" y="180" width="2" height="7" fill="#00ffff"/><rect x="560" y="182" width="1" height="8" fill="#ff4848"/><rect x="560" y="184" width="2" height="3" fill="#ff4848"/><rect x="562" y="181" width="1" height="9" fill="#00ffff"/><rect x="562" y="184" width="2" height="6" fill="#00ffff"/><rect x="565" y="189" width="1" height="7" fill="#00ffff"/><rect x="565" y="190" width="2" height="7" fill="#00ffff"/><rect x="568" y="194" width="1" height="4" fill="#ff4848"/><rect x="568" y="194" width="2" height="2" fill="#ff4848"/><rect x="571" y="189" width="1" height="7" fill="#ff4848"/><rect x="571" y="190" width="2" height="4" fill="#ff4848"/><rect x="574" y="182" width="1" height="11" fill="#ff4848"/><rect x="574" y="185" width="2" height="5" fill="#ff4848"/><rect x="576" y="184" width="1" height="1" fill="#00ffff"/><rect x="576" y="185" width="2" height="2" fill="#00ffff"/><rect x="579" y="184" width="1" height="7" fill="#00ffff"/><rect x="579" y="185" width="2" height="4" fill="#00ffff"/><rect x="582" y="185" width="1" height="6" fill="#ff4848"/><rect x="582" y="186" width="2" height="3" fill="#ff4848"/><rect x="585" y="186" width="1" height="6" fill="#00ffff"/><rect x="585" y="186" width="2" height="5" fill="#00ffff"/><rect x="588" y="191" width="1" height="2" fill="#00ffff"/><rect x="588" y="191" width="2" height="2" fill="#00ffff"/><rect x="590" y="190" width="1" height="6" fill="#00ffff"/><rect x="590" y="192" width="2" height="3" fill="#00ffff"/><rect x="593" y="195" width="1" height="6" fill="#00ffff"/><rect x="593" y="195" width="2" height="4" fill="#00ffff"/><rect x="596" y="193" width="1" height="9" fill="#ff4848"/><rect x="596" y="193" width="2" height="6" fill="#ff4848"/><rect x="599" y="191" width="1" height="10" fill="#00ffff"/><rect x="599" y="193" width="2" height="6" fill="#00ffff"/><rect x="602" y="189" width="1" height="12" fill="#ff4848"/><rect x="602" y="192" width="2" height="7" fill="#ff4848"/><rect x="604" y="192" width="1" height="2" fill="#00ffff"/><rect x="604" y="192" width="2" height="2" fill="#00ffff"/><rect x="607" y="191" width="1" height="4" fill="#00ffff"/><rect x="607" y="193" width="2" height="2" fill="#00ffff"/><rect x="610" y="193" width="1" height="3" fill="#ff4848"/><rect x="610" y="193" width="2" height="2" fill="#ff4848"/><rect x="613" y="193" width="1" height="7" fill="#00ffff"/><rect x="613" y="193" width="2" height="5" fill="#00ffff"/><rect x="616" y="198" width="1" height="6" fill="#00ffff"/><rect x="616" y="199" width="2" height="2" fill="#00ffff"/><rect x="618" y="201" width="1" height="5" fill="#00ffff"/><rect x="618" y="201" width="2" height="4" fill="#00ffff"/><rect x="621" y="200" width="1" height="4" fill="#ff4848"/><rect x="621" y="202" width="2" height="2" fill="#ff4848"/><rect x="624" y="201" width="1" height="5" fill="#00ffff"/><rect x="624" y="202" width="2" height="3" fill="#00ffff"/><rect x="627" y="204" width="1" height="8" fill="#00ffff"/><rect x="627" y="205" width="2" height="7" fill="#00ffff"/><rect x="630" y="208" width="1" height="9" fill="#00ffff"/><rect x="630" y="212" width="2" height="5" fill="#00ffff"/><rect x="632" y="211" width="1" height="7" fill="#ff4848"/><rect x="632" y="211" width="2" height="6" fill="#ff4848"/><rect x="635" y="207" width="1" height="4" fill="#ff4848"/><rect x="635" y="207" width="2" height="4" fill="#ff4848"/><rect x="638" y="204" width="1" height="7" fill="#00ffff"/><rect x="638" y="207" width="2" height="2" fill="#00ffff"/><rect x="641" y="206" width="1" height="5" fill="#ff4848"/><rect x="641" y="207" width="2" height="2" fill="#ff4848"/><rect x="644" y="206" width="1" height="4" fill="#00ffff"/><rect x="644" y="207" width="2" height="2" fill="#00ffff"/><rect x="646" y="208" width="1" height="3" fill="#00ffff"/><rect x="646" y="209" width="2" height="2" fill="#00ffff"/><rect x="649" y="205" width="1" height="5" fill="#ff4848"/><rect x="649" y="208" width="2" height="2" fill="#ff4848"/><rect x="652" y="207" width="1" height="2" fill="#00ffff"/><rect x="652" y="208" width="2" height="2" fill="#00ffff"/><rect x="655" y="207" width="1" height="4" fill="#00ffff"/><rect x="655" y="209" width="2" height="2" fill="#00ffff"/><rect x="658" y="209" width="1" height="7" fill="#00ffff"/><rect x="658" y="210" width="2" height="5" fill="#00ffff"/><rect x="660" y="207" width="1" height="10" fill="#ff4848"/><rect x="660" y="211" width="2" height="5" fill="#ff4848"/><rect x="663" y="209" width="1" height="5" fill="#00ffff"/><rect x="663" y="211" width="2" height="3" fill="#00ffff"/><rect x="666" y="208" width="1" height="17" fill="#00ffff"/><rect x="666" y="214" width="2" height="7" fill="#00ffff"/><rect x="669" y="215" width="1" height="22" fill="#00ffff"/><rect x="669" y="221" width="2" height="14" fill="#00ffff"/><rect x="672" y="232" width="1" height="4" fill="#ff4848"/><rect x="672" y="234" width="2" height="2" fill="#ff4848"/><rect x="674" y="226" width="1" height="12" fill="#ff4848"/><rect x="674" y="227" width="2" height="6" fill="#ff4848"/><rect x="677" y="224" width="1" height="9" fill="#00ffff"/><rect x="677" y="227" width="2" height="2" fill="#00ffff"/><rect x="680" y="223" width="1" height="10" fill="#ff4848"/><rect x="680" y="224" width="2" height="4" fill="#ff4848"/><rect x="683" y="223" width="1" height="15" fill="#00ffff"/><rect x="683" y="224" width="2" height="7" fill="#00ffff"/><rect x="686" y="225" width="1" height="7" fill="#ff4848"/><rect x="686" y="228" width="2" height="3" fill="#ff4848"/><rect x="688" y="224" width="1" height="8" fill="#00ffff"/><rect x="688" y="228" width="2" height="2" fill="#00ffff"/><rect x="691" y="224" width="1" height="8" fill="#ff4848"/><rect x="691" y="225" width="2" height="3" fill="#ff4848"/><rect x="694" y="217" width="1" height="9" fill="#ff4848"/><rect x="694" y="219" width="2" height="6" fill="#ff4848"/><rect x="697" y="214" width="1" height="6" fill="#ff4848"/><rect x="697" y="215" width="2" height="4" fill="#ff4848"/><rect x="700" y="210" width="1" height="15" fill="#00ffff"/><rect x="700" y="215" width="2" height="10" fill="#00ffff"/><rect x="702" y="222" width="1" height="9" fill="#00ffff"/><rect x="702" y="225" width="2" height="6" fill="#00ffff"/><rect x="705" y="226" width="1" height="11" fill="#00ffff"/><rect x="705" y="231" width="2" height="5" fill="#00ffff"/><rect x="708" y="235" width="1" height="6" fill="#00ffff"/><rect x="708" y="236" width="2" height="2" fill="#00ffff"/><rect x="711" y="235" width="1" height="6" fill="#00ffff"/><rect x="711" y="237" width="2" height="3" fill="#00ffff"/><rect x="714" y="229" width="1" height="11" fill="#ff4848"/><rect x="714" y="235" width="2" height="5" fill="#ff4848"/><rect x="716" y="234" width="1" height="9" fill="#00ffff"/><rect x="716" y="235" width="2" height="5" fill="#00ffff"/><rect x="719" y="233" width="1" height="9" fill="#ff4848"/><rect x="719" y="235" width="2" height="5" fill="#ff4848"/><rect x="722" y="221" width="1" height="14" fill="#ff4848"/><rect x="722" y="223" width="2" height="12" fill="#ff4848"/><rect x="725" y="223" width="1" height="4" fill="#00ffff"/><rect x="725" y="223" width="2" height="2" fill="#00ffff"/><rect x="728" y="215" width="1" height="15" fill="#ff4848"/><rect x="728" y="216" width="2" height="10" fill="#ff4848"/><rect x="730" y="202" width="1" height="16" fill="#ff4848"/><rect x="730" y="208" width="2" height="8" fill="#ff4848"/><rect x="733" y="202" width="1" height="8" fill="#ff4848"/><rect x="733" y="203" width="2" height="5" fill="#ff4848"/><rect x="736" y="188" width="1" height="16" fill="#ff4848"/><rect x="736" y="192" width="2" height="11" fill="#ff4848"/><polyline points="64.0,292.0 67.5,292.8 71.0,298.3 77.8,306.5 87.3,313.3 97.0,317.4 105.0,322.9 112.0,324.3 120.0,320.0 128.4,320.0 142.0,320.2 161.0,319.5 168.0,322.6 176.2,321.5 185.8,321.5 190.0,323.6 196.7,320.2 203.8,319.0 213.6,317.3 223.4,323.9 233.0,317.3 243.0,312.4 255.0,301.2 265.6,290.6 276.0,273.0 286.9,250.0 297.5,221.6 308.0,191.5 318.7,189.0 340.0,186.9 357.7,185.5 378.9,186.2 396.6,186.2 410.8,182.7 421.4,184.4 428.5,191.5 435.5,200.4 446.0,193.0 450.0,188.0 464.0,175.6 481.9,155.0 496.0,161.4 506.6,177.3 513.7,196.8 524.3,211.0 535.0,202.0 545.6,195.0 570.4,194.0 584.5,200.4 598.7,202.0 612.8,209.2 623.5,216.3 634.0,218.0 645.3,214.6 654.2,212.9 661.2,213.4 666.6,217.3 671.0,227.9 677.2,240.3 684.3,245.6 687.8,249.2 702.0,249.5 714.4,249.2 723.2,247.4 728.5,246.5 733.9,250.0 736.5,252.4" fill="none" stroke="#e000e0" stroke-width="1" /><polyline points="64.0,286.0 73.7,290.0 87.3,295.5 101.0,301.0 112.0,307.2 120.0,311.3 131.0,312.0 142.0,313.3 150.0,314.0 159.8,312.6 169.4,310.6 180.3,310.0 191.3,306.5 203.8,302.0 216.9,292.8 230.0,281.4 243.0,266.7 255.0,248.0 269.0,221.6 283.3,196.8 297.5,177.3 308.0,170.3 322.0,168.5 336.4,171.3 350.6,175.6 361.2,177.3 382.4,177.3 396.6,179.0 410.8,176.3 425.0,172.7 439.0,163.2 450.0,156.0 464.0,140.2 481.9,131.3 496.0,134.9 510.0,142.0 520.8,150.8 531.4,163.2 545.6,170.3 566.8,171.3 581.0,175.6 595.0,182.7 609.3,191.5 627.0,198.6 640.0,203.0 647.0,205.8 657.7,206.7 668.3,209.3 679.0,213.8 686.0,218.2 693.0,220.0 703.8,224.4 718.0,232.3 726.8,229.7 736.5,224.4" fill="none" stroke="#e0e0e0" stroke-width="1" /><polyline points="64.0,281.2 66.2,282.6 69.6,278.5 76.4,275.5 84.6,275.3 92.8,278.5 98.3,280.5 105.0,283.2 112.0,288.7 117.4,297.0 121.5,301.0 131.0,303.8 142.0,306.5 150.0,307.9 155.7,307.9 164.0,307.2 168.0,301.7 173.5,300.3 180.3,298.3 185.8,295.5 190.0,291.4 194.0,290.0 203.8,287.0 213.6,278.0 223.4,256.9 230.0,247.0 239.7,229.0 249.5,212.7 250.0,211.0 257.4,188.8 264.7,170.4 270.8,160.6 277.0,149.6 283.0,146.0 286.8,139.8 292.9,134.9 299.0,138.6 304.0,143.5 308.8,149.0 318.6,150.2 335.8,150.8 342.0,158.2 350.0,165.5 355.9,169.2 371.8,171.3 407.2,171.3 414.3,167.8 424.9,156.0 432.0,133.0 439.0,126.0 450.0,122.5 460.6,115.4 471.2,106.5 492.5,105.5 503.0,97.7 512.0,91.3 520.8,101.2 527.9,115.4 536.7,138.4 545.6,145.5 556.2,146.5 577.4,146.5 591.6,159.6 605.8,173.8 616.4,174.9 630.5,180.9 641.0,189.7 645.3,194.3 652.4,198.7 664.0,199.2 668.3,192.5 671.9,188.0 678.0,185.4 688.7,186.3 694.9,190.7 702.0,197.8 710.8,208.4 718.0,215.5 725.0,215.2 729.4,212.0 733.9,203.0 736.5,197.0" fill="none" stroke="#e8e800" stroke-width="1" /><rect x="64" y="394" width="2" height="4" fill="#a00000"/><rect x="66" y="395" width="2" height="4" fill="#a00000"/><rect x="69" y="396" width="2" height="4" fill="#a00000"/><rect x="72" y="397" width="2" height="4" fill="#a00000"/><rect x="75" y="398" width="2" height="4" fill="#a00000"/><rect x="77" y="399" width="2" height="4" fill="#a00000"/><rect x="80" y="400" width="2" height="4" fill="#a00000"/><rect x="83" y="400" width="2" height="4" fill="#a00000"/><rect x="86" y="401" width="2" height="4" fill="#a00000"/><rect x="89" y="402" width="2" height="4" fill="#a00000"/><rect x="91" y="403" width="2" height="4" fill="#a00000"/><rect x="94" y="404" width="2" height="4" fill="#a00000"/><rect x="97" y="404" width="2" height="4" fill="#a00000"/><rect x="100" y="405" width="2" height="4" fill="#a00000"/><rect x="103" y="406" width="2" height="4" fill="#a00000"/><rect x="105" y="407" width="2" height="4" fill="#a00000"/><rect x="108" y="408" width="2" height="4" fill="#a00000"/><rect x="111" y="408" width="2" height="4" fill="#a00000"/><rect x="114" y="409" width="2" height="4" fill="#a00000"/><rect x="117" y="410" width="2" height="4" fill="#a00000"/><rect x="119" y="411" width="2" height="4" fill="#a00000"/><rect x="122" y="412" width="2" height="3" fill="#a00000"/><rect x="125" y="413" width="2" height="3" fill="#a00000"/><rect x="128" y="413" width="2" height="3" fill="#a00000"/><rect x="131" y="413" width="2" height="3" fill="#a00000"/><rect x="133" y="414" width="2" height="3" fill="#a00000"/><rect x="136" y="414" width="2" height="3" fill="#a00000"/><rect x="139" y="414" width="2" height="3" fill="#a00000"/><rect x="142" y="415" width="2" height="3" fill="#a00000"/><rect x="145" y="415" width="2" height="3" fill="#a00000"/><rect x="148" y="416" width="2" height="3" fill="#a00000"/><rect x="150" y="416" width="2" height="3" fill="#a00000"/><rect x="153" y="416" width="2" height="3" fill="#a00000"/><rect x="156" y="416" width="2" height="3" fill="#a00000"/><rect x="159" y="416" width="2" height="3" fill="#a00000"/><rect x="162" y="415" width="2" height="5" fill="#0000ff"/><rect x="164" y="415" width="2" height="5" fill="#0000ff"/><rect x="167" y="414" width="2" height="5" fill="#0000ff"/><rect x="170" y="413" width="2" height="5" fill="#0000ff"/><rect x="173" y="413" width="2" height="5" fill="#0000ff"/><rect x="176" y="412" width="2" height="5" fill="#0000ff"/><rect x="178" y="411" width="2" height="6" fill="#0000ff"/><rect x="181" y="410" width="2" height="6" fill="#0000ff"/><rect x="184" y="409" width="2" height="6" fill="#0000ff"/><rect x="187" y="408" width="2" height="6" fill="#0000ff"/><rect x="190" y="407" width="2" height="6" fill="#0000ff"/><rect x="192" y="405" width="2" height="8" fill="#0000ff"/><rect x="195" y="403" width="2" height="8" fill="#0000ff"/><rect x="198" y="401" width="2" height="8" fill="#0000ff"/><rect x="201" y="400" width="2" height="8" fill="#0000ff"/><rect x="204" y="398" width="2" height="8" fill="#0000ff"/><rect x="206" y="396" width="2" height="9" fill="#0000ff"/><rect x="209" y="394" width="2" height="9" fill="#0000ff"/><rect x="212" y="392" width="2" height="9" fill="#0000ff"/><rect x="215" y="389" width="2" height="9" fill="#0000ff"/><rect x="218" y="387" width="2" height="9" fill="#0000ff"/><rect x="220" y="386" width="2" height="9" fill="#0000ff"/><rect x="223" y="384" width="2" height="8" fill="#0000ff"/><rect x="226" y="382" width="2" height="8" fill="#0000ff"/><rect x="229" y="380" width="2" height="8" fill="#0000ff"/><rect x="232" y="379" width="2" height="8" fill="#0000ff"/><rect x="234" y="377" width="2" height="8" fill="#0000ff"/><rect x="237" y="376" width="2" height="7" fill="#0000ff"/><rect x="240" y="374" width="2" height="7" fill="#0000ff"/><rect x="243" y="373" width="2" height="7" fill="#0000ff"/><rect x="246" y="372" width="2" height="7" fill="#0000ff"/><rect x="248" y="370" width="2" height="7" fill="#0000ff"/><rect x="251" y="369" width="2" height="7" fill="#0000ff"/><rect x="254" y="368" width="2" height="6" fill="#0000ff"/><rect x="257" y="367" width="2" height="6" fill="#0000ff"/><rect x="260" y="366" width="2" height="6" fill="#0000ff"/><rect x="262" y="365" width="2" height="6" fill="#0000ff"/><rect x="265" y="364" width="2" height="6" fill="#0000ff"/><rect x="268" y="363" width="2" height="6" fill="#0000ff"/><rect x="271" y="363" width="2" height="5" fill="#0000ff"/><rect x="274" y="362" width="2" height="5" fill="#0000ff"/><rect x="276" y="361" width="2" height="5" fill="#0000ff"/><rect x="279" y="360" width="2" height="5" fill="#0000ff"/><rect x="282" y="359" width="2" height="5" fill="#0000ff"/><rect x="285" y="359" width="2" height="5" fill="#0000ff"/><rect x="288" y="358" width="2" height="4" fill="#0000ff"/><rect x="290" y="358" width="2" height="4" fill="#0000ff"/><rect x="293" y="358" width="2" height="4" fill="#0000ff"/><rect x="296" y="357" width="2" height="4" fill="#0000ff"/><rect x="299" y="357" width="2" height="4" fill="#0000ff"/><rect x="302" y="357" width="2" height="4" fill="#0000ff"/><rect x="304" y="357" width="2" height="3" fill="#0000ff"/><rect x="307" y="357" width="2" height="3" fill="#0000ff"/><rect x="310" y="357" width="2" height="3" fill="#0000ff"/><rect x="313" y="357" width="2" height="3" fill="#0000ff"/><rect x="316" y="357" width="2" height="3" fill="#0000ff"/><rect x="318" y="357" width="2" height="3" fill="#0000ff"/><rect x="321" y="357" width="2" height="3" fill="#0000ff"/><rect x="324" y="357" width="2" height="3" fill="#a00000"/><rect x="327" y="357" width="2" height="3" fill="#a00000"/><rect x="330" y="357" width="2" height="3" fill="#a00000"/><rect x="332" y="357" width="2" height="3" fill="#a00000"/><rect x="335" y="358" width="2" height="3" fill="#a00000"/><rect x="338" y="358" width="2" height="3" fill="#a00000"/><rect x="341" y="358" width="2" height="3" fill="#a00000"/><rect x="344" y="358" width="2" height="3" fill="#a00000"/><rect x="346" y="359" width="2" height="3" fill="#a00000"/><rect x="349" y="359" width="2" height="3" fill="#a00000"/><rect x="352" y="359" width="2" height="3" fill="#a00000"/><rect x="355" y="360" width="2" height="3" fill="#a00000"/><rect x="358" y="360" width="2" height="3" fill="#a00000"/><rect x="360" y="360" width="2" height="3" fill="#a00000"/><rect x="363" y="360" width="2" height="3" fill="#a00000"/><rect x="366" y="361" width="2" height="3" fill="#a00000"/><rect x="369" y="361" width="2" height="3" fill="#a00000"/><rect x="372" y="361" width="2" height="3" fill="#a00000"/><rect x="374" y="361" width="2" height="3" fill="#a00000"/><rect x="377" y="361" width="2" height="3" fill="#a00000"/><rect x="380" y="362" width="2" height="3" fill="#a00000"/><rect x="383" y="362" width="2" height="3" fill="#a00000"/><rect x="386" y="362" width="2" height="3" fill="#a00000"/><rect x="388" y="362" width="2" height="3" fill="#a00000"/><rect x="391" y="363" width="2" height="3" fill="#a00000"/><rect x="394" y="363" width="2" height="3" fill="#a00000"/><rect x="397" y="363" width="2" height="3" fill="#a00000"/><rect x="400" y="364" width="2" height="3" fill="#a00000"/><rect x="402" y="364" width="2" height="3" fill="#a00000"/><rect x="405" y="365" width="2" height="3" fill="#a00000"/><rect x="408" y="365" width="2" height="3" fill="#a00000"/><rect x="411" y="366" width="2" height="3" fill="#a00000"/><rect x="414" y="366" width="2" height="3" fill="#a00000"/><rect x="416" y="367" width="2" height="3" fill="#a00000"/><rect x="419" y="367" width="2" height="3" fill="#0000ff"/><rect x="422" y="367" width="2" height="4" fill="#0000ff"/><rect x="425" y="367" width="2" height="4" fill="#0000ff"/><rect x="428" y="367" width="2" height="4" fill="#0000ff"/><rect x="430" y="366" width="2" height="4" fill="#0000ff"/><rect x="433" y="366" width="2" height="4" fill="#0000ff"/><rect x="436" y="366" width="2" height="4" fill="#0000ff"/><rect x="439" y="366" width="2" height="3" fill="#0000ff"/><rect x="442" y="365" width="2" height="5" fill="#0000ff"/><rect x="444" y="366" width="2" height="5" fill="#0000ff"/><rect x="447" y="366" width="2" height="5" fill="#0000ff"/><rect x="450" y="368" width="2" height="3" fill="#a00000"/><rect x="453" y="368" width="2" height="5" fill="#0000ff"/><rect x="456" y="367" width="2" height="5" fill="#0000ff"/><rect x="458" y="367" width="2" height="5" fill="#0000ff"/><rect x="461" y="366" width="2" height="4" fill="#0000ff"/><rect x="464" y="366" width="2" height="4" fill="#0000ff"/><rect x="467" y="366" width="2" height="4" fill="#0000ff"/><rect x="470" y="366" width="2" height="4" fill="#0000ff"/><rect x="472" y="366" width="2" height="4" fill="#0000ff"/><rect x="475" y="366" width="2" height="4" fill="#0000ff"/><rect x="478" y="366" width="2" height="4" fill="#0000ff"/><rect x="481" y="365" width="2" height="5" fill="#0000ff"/><rect x="484" y="365" width="2" height="5" fill="#0000ff"/><rect x="486" y="366" width="2" height="5" fill="#0000ff"/><rect x="489" y="366" width="2" height="5" fill="#a00000"/><rect x="492" y="368" width="2" height="5" fill="#a00000"/><rect x="495" y="369" width="2" height="5" fill="#a00000"/><rect x="498" y="371" width="2" height="6" fill="#a00000"/><rect x="500" y="372" width="2" height="6" fill="#a00000"/><rect x="503" y="375" width="2" height="6" fill="#a00000"/><rect x="506" y="377" width="2" height="6" fill="#a00000"/><rect x="509" y="379" width="2" height="6" fill="#a00000"/><rect x="512" y="382" width="2" height="6" fill="#a00000"/><rect x="514" y="384" width="2" height="6" fill="#a00000"/><rect x="517" y="386" width="2" height="6" fill="#a00000"/><rect x="520" y="389" width="2" height="4" fill="#a00000"/><rect x="523" y="390" width="2" height="4" fill="#a00000"/><rect x="526" y="391" width="2" height="4" fill="#a00000"/><rect x="528" y="391" width="2" height="4" fill="#a00000"/><rect x="531" y="392" width="2" height="4" fill="#a00000"/><rect x="534" y="393" width="2" height="4" fill="#a00000"/><rect x="537" y="394" width="2" height="4" fill="#a00000"/><rect x="540" y="394" width="2" height="4" fill="#a00000"/><rect x="542" y="395" width="2" height="4" fill="#a00000"/><rect x="545" y="396" width="2" height="4" fill="#a00000"/><rect x="548" y="396" width="2" height="4" fill="#a00000"/><rect x="551" y="397" width="2" height="4" fill="#a00000"/><rect x="554" y="398" width="2" height="4" fill="#a00000"/><rect x="556" y="399" width="2" height="4" fill="#a00000"/><rect x="559" y="399" width="2" height="4" fill="#a00000"/><rect x="562" y="400" width="2" height="4" fill="#a00000"/><rect x="565" y="401" width="2" height="4" fill="#a00000"/><rect x="568" y="402" width="2" height="4" fill="#a00000"/><rect x="570" y="403" width="2" height="4" fill="#a00000"/><rect x="573" y="404" width="2" height="4" fill="#a00000"/><rect x="576" y="405" width="2" height="4" fill="#a00000"/><rect x="579" y="406" width="2" height="4" fill="#a00000"/><rect x="582" y="407" width="2" height="4" fill="#a00000"/><rect x="584" y="408" width="2" height="4" fill="#a00000"/><rect x="587" y="409" width="2" height="4" fill="#a00000"/><rect x="590" y="410" width="2" height="4" fill="#a00000"/><rect x="593" y="411" width="2" height="4" fill="#a00000"/><rect x="596" y="412" width="2" height="4" fill="#a00000"/><rect x="598" y="413" width="2" height="4" fill="#a00000"/><rect x="601" y="414" width="2" height="4" fill="#a00000"/><rect x="604" y="414" width="2" height="4" fill="#a00000"/><rect x="607" y="416" width="2" height="4" fill="#a00000"/><rect x="609" y="416" width="2" height="4" fill="#a00000"/><rect x="612" y="417" width="2" height="4" fill="#a00000"/><rect x="615" y="418" width="2" height="4" fill="#a00000"/><rect x="618" y="419" width="2" height="4" fill="#a00000"/><rect x="621" y="420" width="2" height="4" fill="#a00000"/><rect x="623" y="421" width="2" height="4" fill="#a00000"/><rect x="626" y="422" width="2" height="3" fill="#a00000"/><rect x="629" y="422" width="2" height="3" fill="#a00000"/><rect x="632" y="422" width="2" height="3" fill="#a00000"/><rect x="635" y="423" width="2" height="3" fill="#a00000"/><rect x="637" y="423" width="2" height="3" fill="#a00000"/><rect x="640" y="424" width="2" height="3" fill="#a00000"/><rect x="643" y="424" width="2" height="3" fill="#a00000"/><rect x="646" y="425" width="2" height="3" fill="#a00000"/><rect x="649" y="425" width="2" height="3" fill="#a00000"/><rect x="651" y="425" width="2" height="3" fill="#a00000"/><rect x="654" y="425" width="2" height="3" fill="#a00000"/><rect x="657" y="426" width="2" height="3" fill="#a00000"/><rect x="660" y="426" width="2" height="3" fill="#a00000"/><rect x="663" y="426" width="2" height="3" fill="#a00000"/><rect x="665" y="426" width="2" height="3" fill="#a00000"/><rect x="668" y="426" width="2" height="3" fill="#a00000"/><rect x="671" y="426" width="2" height="3" fill="#a00000"/><rect x="674" y="426" width="2" height="3" fill="#a00000"/><rect x="677" y="427" width="2" height="3" fill="#a00000"/><rect x="679" y="426" width="2" height="4" fill="#0000ff"/><rect x="682" y="426" width="2" height="4" fill="#0000ff"/><rect x="685" y="426" width="2" height="4" fill="#0000ff"/><rect x="688" y="425" width="2" height="4" fill="#0000ff"/><rect x="691" y="425" width="2" height="4" fill="#0000ff"/><rect x="693" y="425" width="2" height="4" fill="#0000ff"/><rect x="696" y="425" width="2" height="4" fill="#0000ff"/><rect x="699" y="424" width="2" height="4" fill="#0000ff"/><rect x="702" y="424" width="2" height="4" fill="#0000ff"/><rect x="705" y="424" width="2" height="4" fill="#0000ff"/><rect x="707" y="424" width="2" height="3" fill="#0000ff"/><rect x="710" y="424" width="2" height="3" fill="#0000ff"/><rect x="713" y="424" width="2" height="3" fill="#0000ff"/><rect x="716" y="424" width="2" height="3" fill="#0000ff"/><rect x="719" y="424" width="2" height="5" fill="#0000ff"/><rect x="721" y="423" width="2" height="6" fill="#0000ff"/><rect x="724" y="421" width="2" height="6" fill="#0000ff"/><rect x="727" y="419" width="2" height="8" fill="#0000ff"/><rect x="730" y="418" width="2" height="8" fill="#0000ff"/><rect x="733" y="413" width="2" height="15" fill="#0000ff"/><rect x="735" y="414" width="2" height="3" fill="#0000ff"/><rect x="64" y="503" width="1" height="2" fill="#00ffff"/><rect x="67" y="503" width="1" height="4" fill="#00ffff"/><rect x="70" y="503" width="1" height="5" fill="#00ffff"/><rect x="72" y="503" width="1" height="6" fill="#00ffff"/><rect x="75" y="503" width="1" height="7" fill="#00ffff"/><rect x="78" y="503" width="1" height="8" fill="#00ffff"/><rect x="81" y="503" width="1" height="10" fill="#00ffff"/><rect x="84" y="503" width="1" height="10" fill="#00ffff"/><rect x="86" y="503" width="1" height="10" fill="#00ffff"/><rect x="89" y="503" width="1" height="11" fill="#00ffff"/><rect x="92" y="503" width="1" height="11" fill="#00ffff"/><rect x="95" y="503" width="1" height="8" fill="#00ffff"/><rect x="98" y="503" width="1" height="7" fill="#00ffff"/><rect x="100" y="503" width="1" height="8" fill="#00ffff"/><rect x="103" y="503" width="1" height="6" fill="#00ffff"/><rect x="106" y="503" width="1" height="4" fill="#00ffff"/><rect x="109" y="503" width="1" height="5" fill="#00ffff"/><rect x="112" y="503" width="1" height="3" fill="#00ffff"/><rect x="114" y="503" width="1" height="3" fill="#00ffff"/><rect x="117" y="503" width="1" height="2" fill="#00ffff"/><rect x="120" y="503" width="1" height="1" fill="#00ffff"/><rect x="123" y="501" width="1" height="1" fill="#ff4848"/><rect x="126" y="500" width="1" height="2" fill="#ff4848"/><rect x="128" y="500" width="1" height="2" fill="#ff4848"/><rect x="131" y="499" width="1" height="3" fill="#ff4848"/><rect x="134" y="499" width="1" height="3" fill="#ff4848"/><rect x="137" y="498" width="1" height="4" fill="#ff4848"/><rect x="140" y="498" width="1" height="4" fill="#ff4848"/><rect x="142" y="498" width="1" height="4" fill="#ff4848"/><rect x="145" y="498" width="1" height="4" fill="#ff4848"/><rect x="148" y="498" width="1" height="4" fill="#ff4848"/><rect x="151" y="498" width="1" height="4" fill="#ff4848"/><rect x="154" y="499" width="1" height="3" fill="#ff4848"/><rect x="156" y="498" width="1" height="4" fill="#ff4848"/><rect x="159" y="498" width="1" height="4" fill="#ff4848"/><rect x="162" y="497" width="1" height="5" fill="#ff4848"/><rect x="165" y="498" width="1" height="4" fill="#ff4848"/><rect x="168" y="498" width="1" height="4" fill="#ff4848"/><rect x="170" y="497" width="1" height="5" fill="#ff4848"/><rect x="173" y="498" width="1" height="4" fill="#ff4848"/><rect x="176" y="497" width="1" height="5" fill="#ff4848"/><rect x="179" y="497" width="1" height="5" fill="#ff4848"/><rect x="182" y="497" width="1" height="5" fill="#ff4848"/><rect x="184" y="497" width="1" height="5" fill="#ff4848"/><rect x="187" y="497" width="1" height="5" fill="#ff4848"/><rect x="190" y="497" width="1" height="5" fill="#ff4848"/><rect x="193" y="496" width="1" height="6" fill="#ff4848"/><rect x="196" y="497" width="1" height="5" fill="#ff4848"/><rect x="198" y="496" width="1" height="6" fill="#ff4848"/><rect x="201" y="495" width="1" height="7" fill="#ff4848"/><rect x="204" y="496" width="1" height="6" fill="#ff4848"/><rect x="207" y="495" width="1" height="7" fill="#ff4848"/><rect x="210" y="493" width="1" height="9" fill="#ff4848"/><rect x="212" y="493" width="1" height="9" fill="#ff4848"/><rect x="215" y="494" width="1" height="8" fill="#ff4848"/><rect x="218" y="492" width="1" height="10" fill="#ff4848"/><rect x="221" y="492" width="1" height="10" fill="#ff4848"/><rect x="224" y="492" width="1" height="10" fill="#ff4848"/><rect x="226" y="493" width="1" height="9" fill="#ff4848"/><rect x="229" y="490" width="1" height="12" fill="#ff4848"/><rect x="232" y="489" width="1" height="13" fill="#ff4848"/><rect x="235" y="490" width="1" height="12" fill="#ff4848"/><rect x="238" y="488" width="1" height="14" fill="#ff4848"/><rect x="240" y="491" width="1" height="11" fill="#ff4848"/><rect x="243" y="490" width="1" height="12" fill="#ff4848"/><rect x="246" y="489" width="1" height="13" fill="#ff4848"/><rect x="249" y="487" width="1" height="15" fill="#ff4848"/><rect x="252" y="486" width="1" height="16" fill="#ff4848"/><rect x="254" y="487" width="1" height="15" fill="#ff4848"/><rect x="257" y="486" width="1" height="16" fill="#ff4848"/><rect x="260" y="483" width="1" height="19" fill="#ff4848"/><rect x="263" y="482" width="1" height="20" fill="#ff4848"/><rect x="266" y="481" width="1" height="21" fill="#ff4848"/><rect x="268" y="487" width="1" height="15" fill="#ff4848"/><rect x="271" y="487" width="1" height="15" fill="#ff4848"/><rect x="274" y="490" width="1" height="12" fill="#ff4848"/><rect x="277" y="493" width="1" height="9" fill="#ff4848"/><rect x="280" y="496" width="1" height="6" fill="#ff4848"/><rect x="282" y="499" width="1" height="3" fill="#ff4848"/><rect x="288" y="503" width="1" height="3" fill="#00ffff"/><rect x="291" y="503" width="1" height="6" fill="#00ffff"/><rect x="294" y="503" width="1" height="9" fill="#00ffff"/><rect x="296" y="503" width="1" height="10" fill="#00ffff"/><rect x="299" y="503" width="1" height="13" fill="#00ffff"/><rect x="302" y="503" width="1" height="17" fill="#00ffff"/><rect x="305" y="503" width="1" height="16" fill="#00ffff"/><rect x="308" y="503" width="1" height="16" fill="#00ffff"/><rect x="310" y="503" width="1" height="17" fill="#00ffff"/><rect x="313" y="503" width="1" height="21" fill="#00ffff"/><rect x="316" y="503" width="1" height="20" fill="#00ffff"/><rect x="319" y="503" width="1" height="25" fill="#00ffff"/><rect x="322" y="503" width="1" height="23" fill="#00ffff"/><rect x="324" y="503" width="1" height="23" fill="#00ffff"/><rect x="327" y="503" width="1" height="18" fill="#00ffff"/><rect x="330" y="503" width="1" height="16" fill="#00ffff"/><rect x="333" y="503" width="1" height="15" fill="#00ffff"/><rect x="336" y="503" width="1" height="16" fill="#00ffff"/><rect x="338" y="503" width="1" height="16" fill="#00ffff"/><rect x="341" y="503" width="1" height="13" fill="#00ffff"/><rect x="344" y="503" width="1" height="11" fill="#00ffff"/><rect x="347" y="503" width="1" height="11" fill="#00ffff"/><rect x="350" y="503" width="1" height="10" fill="#00ffff"/><rect x="352" y="503" width="1" height="9" fill="#00ffff"/><rect x="355" y="503" width="1" height="8" fill="#00ffff"/><rect x="358" y="503" width="1" height="7" fill="#00ffff"/><rect x="361" y="503" width="1" height="5" fill="#00ffff"/><rect x="364" y="503" width="1" height="3" fill="#00ffff"/><rect x="366" y="503" width="1" height="3" fill="#00ffff"/><rect x="369" y="503" width="1" height="2" fill="#00ffff"/><rect x="372" y="503" width="1" height="2" fill="#00ffff"/><rect x="375" y="503" width="1" height="2" fill="#00ffff"/><rect x="378" y="503" width="1" height="2" fill="#00ffff"/><rect x="380" y="503" width="1" height="1" fill="#00ffff"/><rect x="383" y="503" width="1" height="1" fill="#00ffff"/><rect x="386" y="503" width="1" height="1" fill="#00ffff"/><rect x="389" y="503" width="1" height="1" fill="#00ffff"/><rect x="392" y="503" width="1" height="1" fill="#00ffff"/><rect x="394" y="503" width="1" height="1" fill="#00ffff"/><rect x="406" y="501" width="1" height="1" fill="#ff4848"/><rect x="408" y="501" width="1" height="1" fill="#ff4848"/><rect x="411" y="500" width="1" height="2" fill="#ff4848"/><rect x="414" y="497" width="1" height="5" fill="#ff4848"/><rect x="417" y="494" width="1" height="8" fill="#ff4848"/><rect x="420" y="494" width="1" height="8" fill="#ff4848"/><rect x="422" y="490" width="1" height="12" fill="#ff4848"/><rect x="425" y="486" width="1" height="16" fill="#ff4848"/><rect x="428" y="484" width="1" height="18" fill="#ff4848"/><rect x="431" y="481" width="1" height="21" fill="#ff4848"/><rect x="434" y="485" width="1" height="17" fill="#ff4848"/><rect x="436" y="482" width="1" height="20" fill="#ff4848"/><rect x="439" y="486" width="1" height="16" fill="#ff4848"/><rect x="442" y="490" width="1" height="12" fill="#ff4848"/><rect x="445" y="492" width="1" height="10" fill="#ff4848"/><rect x="448" y="498" width="1" height="4" fill="#ff4848"/><rect x="453" y="499" width="1" height="3" fill="#ff4848"/><rect x="456" y="496" width="1" height="6" fill="#ff4848"/><rect x="459" y="496" width="1" height="6" fill="#ff4848"/><rect x="462" y="496" width="1" height="6" fill="#ff4848"/><rect x="464" y="494" width="1" height="8" fill="#ff4848"/><rect x="467" y="495" width="1" height="7" fill="#ff4848"/><rect x="470" y="499" width="1" height="3" fill="#ff4848"/><rect x="473" y="501" width="1" height="1" fill="#ff4848"/><rect x="476" y="503" width="1" height="1" fill="#00ffff"/><rect x="478" y="503" width="1" height="3" fill="#00ffff"/><rect x="481" y="503" width="1" height="6" fill="#00ffff"/><rect x="484" y="503" width="1" height="7" fill="#00ffff"/><rect x="487" y="503" width="1" height="9" fill="#00ffff"/><rect x="490" y="503" width="1" height="11" fill="#00ffff"/><rect x="492" y="503" width="1" height="14" fill="#00ffff"/><rect x="495" y="503" width="1" height="16" fill="#00ffff"/><rect x="498" y="503" width="1" height="17" fill="#00ffff"/><rect x="501" y="503" width="1" height="18" fill="#00ffff"/><rect x="504" y="503" width="1" height="23" fill="#00ffff"/><rect x="506" y="503" width="1" height="28" fill="#00ffff"/><rect x="509" y="503" width="1" height="25" fill="#00ffff"/><rect x="512" y="503" width="1" height="26" fill="#00ffff"/><rect x="515" y="503" width="1" height="23" fill="#00ffff"/><rect x="518" y="503" width="1" height="24" fill="#00ffff"/><rect x="520" y="503" width="1" height="19" fill="#00ffff"/><rect x="523" y="503" width="1" height="9" fill="#00ffff"/><rect x="526" y="503" width="1" height="3" fill="#00ffff"/><rect x="529" y="499" width="1" height="3" fill="#ff4848"/><rect x="532" y="496" width="1" height="6" fill="#ff4848"/><rect x="534" y="494" width="1" height="8" fill="#ff4848"/><rect x="537" y="494" width="1" height="8" fill="#ff4848"/><rect x="540" y="493" width="1" height="9" fill="#ff4848"/><rect x="543" y="492" width="1" height="10" fill="#ff4848"/><rect x="546" y="493" width="1" height="9" fill="#ff4848"/><rect x="548" y="493" width="1" height="9" fill="#ff4848"/><rect x="551" y="495" width="1" height="7" fill="#ff4848"/><rect x="554" y="498" width="1" height="4" fill="#ff4848"/><rect x="557" y="501" width="1" height="1" fill="#ff4848"/><rect x="565" y="503" width="1" height="1" fill="#00ffff"/><rect x="568" y="503" width="1" height="3" fill="#00ffff"/><rect x="571" y="503" width="1" height="3" fill="#00ffff"/><rect x="574" y="503" width="1" height="3" fill="#00ffff"/><rect x="576" y="503" width="1" height="3" fill="#00ffff"/><rect x="579" y="503" width="1" height="3" fill="#00ffff"/><rect x="582" y="503" width="1" height="3" fill="#00ffff"/><rect x="585" y="503" width="1" height="3" fill="#00ffff"/><rect x="588" y="503" width="1" height="3" fill="#00ffff"/><rect x="590" y="503" width="1" height="3" fill="#00ffff"/><rect x="593" y="503" width="1" height="3" fill="#00ffff"/><rect x="596" y="503" width="1" height="3" fill="#00ffff"/><rect x="599" y="503" width="1" height="3" fill="#00ffff"/><rect x="602" y="503" width="1" height="2" fill="#00ffff"/><rect x="604" y="503" width="1" height="2" fill="#00ffff"/><rect x="607" y="503" width="1" height="2" fill="#00ffff"/><rect x="610" y="503" width="1" height="2" fill="#00ffff"/><rect x="613" y="503" width="1" height="2" fill="#00ffff"/><rect x="616" y="503" width="1" height="1" fill="#00ffff"/><rect x="618" y="503" width="1" height="1" fill="#00ffff"/><rect x="621" y="503" width="1" height="1" fill="#00ffff"/><rect x="624" y="501" width="1" height="1" fill="#ff4848"/><rect x="627" y="500" width="1" height="2" fill="#ff4848"/><rect x="630" y="499" width="1" height="3" fill="#ff4848"/><rect x="632" y="499" width="1" height="3" fill="#ff4848"/><rect x="635" y="498" width="1" height="4" fill="#ff4848"/><rect x="638" y="496" width="1" height="6" fill="#ff4848"/><rect x="641" y="497" width="1" height="5" fill="#ff4848"/><rect x="644" y="495" width="1" height="7" fill="#ff4848"/><rect x="646" y="495" width="1" height="7" fill="#ff4848"/><rect x="649" y="495" width="1" height="7" fill="#ff4848"/><rect x="652" y="496" width="1" height="6" fill="#ff4848"/><rect x="655" y="497" width="1" height="5" fill="#ff4848"/><rect x="658" y="496" width="1" height="6" fill="#ff4848"/><rect x="660" y="497" width="1" height="5" fill="#ff4848"/><rect x="666" y="503" width="1" height="3" fill="#00ffff"/><rect x="669" y="503" width="1" height="6" fill="#00ffff"/><rect x="672" y="503" width="1" height="6" fill="#00ffff"/><rect x="674" y="503" width="1" height="9" fill="#00ffff"/><rect x="677" y="503" width="1" height="8" fill="#00ffff"/><rect x="680" y="503" width="1" height="8" fill="#00ffff"/><rect x="683" y="503" width="1" height="6" fill="#00ffff"/><rect x="686" y="503" width="1" height="7" fill="#00ffff"/><rect x="688" y="503" width="1" height="3" fill="#00ffff"/><rect x="691" y="503" width="1" height="1" fill="#00ffff"/><rect x="694" y="500" width="1" height="2" fill="#ff4848"/><rect x="697" y="498" width="1" height="4" fill="#ff4848"/><rect x="700" y="498" width="1" height="4" fill="#ff4848"/><rect x="702" y="497" width="1" height="5" fill="#ff4848"/><rect x="705" y="498" width="1" height="4" fill="#ff4848"/><rect x="708" y="499" width="1" height="3" fill="#ff4848"/><rect x="711" y="501" width="1" height="1" fill="#ff4848"/><rect x="719" y="500" width="1" height="2" fill="#ff4848"/><rect x="722" y="498" width="1" height="4" fill="#ff4848"/><rect x="725" y="497" width="1" height="5" fill="#ff4848"/><rect x="728" y="494" width="1" height="8" fill="#ff4848"/><rect x="730" y="490" width="1" height="12" fill="#ff4848"/><rect x="733" y="489" width="1" height="13" fill="#ff4848"/><rect x="736" y="480" width="1" height="22" fill="#ff4848"/><polyline points="64.0,502.0 74.0,507.4 88.0,511.6 105.7,513.7 119.8,513.7 137.4,509.0 158.5,503.8 179.5,498.6 197.0,495.0 211.2,489.8 221.7,479.2 235.8,471.5 250.0,465.0 260.4,452.9 271.0,449.3 281.5,452.9 292.0,451.0 302.6,458.1 313.0,468.7 327.2,481.0 341.3,491.5 355.4,500.3 369.4,499.6 390.5,500.3 404.6,502.0 420.0,496.8 427.2,491.4 436.3,480.6 445.3,484.2 456.1,484.2 463.4,478.8 470.6,478.0 481.4,482.4 492.3,496.8 506.7,513.0 517.5,522.0 528.4,516.7 542.8,507.7 550.0,504.0 564.5,511.3 579.0,513.8 600.6,516.7 622.3,519.6 644.0,515.0 662.0,508.8 672.9,516.7 683.7,520.3 698.2,513.8 712.6,513.0 723.5,511.3 730.7,504.0 736.0,496.8" fill="none" stroke="#f0f0f0" stroke-width="1" /><polyline points="64.0,502.0 81.0,509.0 95.2,512.6 116.3,514.4 137.4,510.2 165.5,503.8 186.6,498.6 207.7,491.5 228.8,479.2 250.0,468.7 267.5,456.4 285.0,451.0 299.0,454.6 313.0,461.6 330.7,477.5 348.3,491.5 362.4,497.9 383.5,498.6 404.6,501.0 420.0,500.4 430.8,489.6 441.7,484.2 459.7,484.2 474.2,480.6 485.0,480.6 495.9,489.6 510.3,505.9 523.0,518.5 539.2,513.0 553.7,507.7 571.7,511.3 600.6,515.0 629.5,518.5 651.2,516.0 669.3,512.4 691.0,518.5 709.0,515.0 723.5,513.8 736.0,504.0" fill="none" stroke="#f0f000" stroke-width="1" /><polyline points="64.0,638.7 65.5,640.2 67.0,644.0 68.8,656.6 70.5,668.6 72.2,667.0 74.0,665.0 76.7,666.3 79.3,666.9 81.9,664.5 84.6,663.3 87.2,665.4 89.9,668.0 92.6,666.7 95.2,665.0 97.3,670.1 99.4,675.6 102.2,664.4 104.0,669.6 105.7,673.9 108.3,672.0 111.0,670.4 113.3,670.2 115.7,669.0 118.0,670.4 120.7,658.5 123.3,645.8 125.9,647.5 128.6,649.3 131.2,642.4 133.8,637.0 135.6,639.5 137.4,640.5 139.5,651.0 141.6,659.8 143.7,652.1 145.8,643.6 147.9,637.0 150.0,636.0 152.1,635.2 153.8,641.9 155.6,651.0 157.9,641.1 160.2,633.5 161.9,636.8 163.7,640.5 165.8,622.5 168.0,607.0 170.2,616.5 172.5,626.4 174.6,632.6 176.7,638.7 179.0,629.4 181.3,622.9 183.3,618.6 185.3,612.2 187.3,608.8 190.0,611.3 192.7,613.2 195.4,614.1 198.0,618.5 200.6,622.9 203.5,612.2 206.5,604.2 209.4,594.8 211.9,603.6 214.6,591.4 217.2,580.0 219.3,582.2 221.4,580.6 223.5,582.5 225.5,588.6 227.5,594.1 229.5,597.6 231.6,593.3 233.7,588.5 235.8,582.5 238.1,578.0 240.5,576.9 242.8,571.9 245.7,569.9 248.7,569.3 251.6,566.0 253.9,563.7 256.3,557.9 258.6,556.3 261.0,551.9 263.2,558.1 265.3,560.4 267.5,566.6 269.8,566.0 272.2,567.0 274.5,566.0 276.6,569.9 278.7,577.0 280.8,580.7 283.2,573.0 285.7,566.6 287.8,572.2 289.9,574.9 292.0,580.7 294.3,582.5 296.7,585.5 299.0,586.0 300.8,593.0 302.6,601.8 305.2,605.0 307.9,609.7 310.6,613.1 313.2,617.6 315.5,617.3 317.9,618.9 320.2,621.0 322.5,617.7 324.9,617.7 327.2,614.1 329.6,619.9 331.9,625.9 334.3,630.0 337.2,625.7 340.1,624.2 343.0,620.0 345.6,626.2 348.3,634.7 351.0,642.4 353.6,649.3 356.5,641.8 359.5,636.4 362.4,628.2 364.7,626.6 367.1,624.9 369.4,622.9 371.7,622.3 374.1,618.2 376.4,617.6 379.3,624.9 382.3,629.7 385.2,635.2 387.6,636.6 389.9,639.6 392.3,640.5 394.9,634.9 397.6,632.2 400.2,626.1 402.8,621.0 405.7,621.8 408.7,624.3 411.6,624.7 414.4,613.3 417.2,601.3 420.0,591.0 422.9,621.7 425.0,606.2 427.2,589.2 429.9,581.0 432.6,575.5 434.5,580.6 436.3,583.8 438.1,596.6 439.9,610.9 442.6,615.9 445.3,620.0 448.0,619.6 450.7,616.3 453.4,609.3 456.1,601.8 458.5,592.0 460.8,581.2 463.0,593.7 465.2,607.3 467.0,603.1 468.8,601.8 471.1,608.2 473.5,617.4 475.6,612.7 477.8,610.1 480.5,613.0 483.2,615.2 485.8,645.2 488.0,643.2 490.1,641.6 492.3,639.8 494.7,647.6 497.1,651.9 499.5,659.6 502.3,663.0 505.0,668.5 507.8,672.3 510.4,667.2 513.1,663.5 515.7,661.4 518.5,659.2 521.2,657.8 523.5,648.9 525.7,642.0 528.0,633.9 530.2,627.0 532.6,629.1 535.0,630.9 537.4,632.5 540.1,629.8 542.8,628.9 544.6,631.1 546.4,632.5 549.3,625.3 551.4,635.5 553.4,644.7 555.5,656.0 557.9,659.1 560.3,658.8 562.7,661.4 564.5,655.8 566.3,652.4 569.0,651.2 571.7,652.4 574.1,654.6 576.6,657.1 579.0,657.8 581.4,659.8 583.8,659.9 586.2,661.4 588.0,656.2 589.8,652.4 592.0,655.0 594.3,661.0 596.5,664.8 598.8,668.7 601.1,670.1 603.3,672.7 605.6,673.9 607.9,675.9 610.7,679.6 613.4,681.4 616.2,683.1 618.4,676.9 620.5,672.3 622.9,672.9 625.3,669.7 627.7,670.5 630.1,671.0 632.6,671.0 635.0,671.6 637.7,654.9 640.4,639.8 642.2,643.9 644.0,650.6 646.9,641.6 649.3,641.8 651.7,638.9 654.1,639.8 656.7,646.0 659.4,653.1 662.0,657.8 664.4,669.4 666.9,682.2 669.3,695.8 671.1,684.4 672.9,672.3 674.7,673.2 676.5,674.1 679.2,665.5 681.9,656.0 684.2,663.3 686.6,668.7 689.1,645.2 691.5,639.4 694.0,635.0 696.4,630.7 698.4,634.3 700.5,637.8 702.5,643.4 704.7,650.0 706.8,655.0 709.0,659.6 711.4,659.6 713.8,656.9 716.2,657.8 718.6,650.4 721.1,641.7 723.5,632.5 726.2,630.6 728.9,628.9 731.4,607.3 733.7,602.6 736.0,596.4" fill="none" stroke="#ff40f0" stroke-width="1.3" /><polyline points="64.0,638.7 65.5,640.2 67.0,644.0 68.8,656.6 70.5,668.6 72.2,667.0 74.0,665.0 76.7,666.3 79.3,666.9 81.9,664.5 84.6,663.3 87.2,665.4 89.9,668.0 92.6,666.7 95.2,665.0 97.3,670.1 99.4,675.6 102.2,664.4 104.0,669.6 105.7,673.9 108.3,672.0 111.0,670.4 113.3,670.2 115.7,669.0 118.0,670.4 120.7,658.5 123.3,645.8 125.9,647.5 128.6,649.3 131.2,642.4 133.8,637.0 135.6,639.5 137.4,640.5 139.5,651.0 141.6,659.8 143.7,652.1 145.8,643.6 147.9,637.0 150.0,636.0 152.1,635.2 153.8,641.9 155.6,651.0 157.9,641.1 160.2,633.5 161.9,636.8 163.7,640.5 165.8,622.5 168.0,607.0 170.2,616.5 172.5,626.4 174.6,632.6 176.7,638.7 179.0,629.4 181.3,622.9 183.3,618.6 185.3,612.2 187.3,608.8 190.0,611.3 192.7,613.2 195.4,614.1 198.0,618.5 200.6,622.9 203.5,612.2 206.5,604.2 209.4,594.8 211.9,603.6 214.6,591.4 217.2,580.0 219.3,582.2 221.4,580.6 223.5,582.5 225.5,588.6 227.5,594.1 229.5,597.6 231.6,593.3 233.7,588.5 235.8,582.5 238.1,578.0 240.5,576.9 242.8,571.9 245.7,569.9 248.7,569.3 251.6,566.0 253.9,563.7 256.3,557.9 258.6,556.3 261.0,551.9 263.2,558.1 265.3,560.4 267.5,566.6 269.8,566.0 272.2,567.0 274.5,566.0 276.6,569.9 278.7,577.0 280.8,580.7 283.2,573.0 285.7,566.6 287.8,572.2 289.9,574.9 292.0,580.7 294.3,582.5 296.7,585.5 299.0,586.0 300.8,593.0 302.6,601.8 305.2,605.0 307.9,609.7 310.6,613.1 313.2,617.6 315.5,617.3 317.9,618.9 320.2,621.0 322.5,617.7 324.9,617.7 327.2,614.1 329.6,619.9 331.9,625.9 334.3,630.0 337.2,625.7 340.1,624.2 343.0,620.0 345.6,626.2 348.3,634.7 351.0,642.4 353.6,649.3 356.5,641.8 359.5,636.4 362.4,628.2 364.7,626.6 367.1,624.9 369.4,622.9 371.7,622.3 374.1,618.2 376.4,617.6 379.3,624.9 382.3,629.7 385.2,635.2 387.6,636.6 389.9,639.6 392.3,640.5 394.9,634.9 397.6,632.2 400.2,626.1 402.8,621.0 405.7,621.8 408.7,624.3 411.6,624.7 414.4,613.3 417.2,601.3 420.0,591.0 422.9,621.7 425.0,606.2 427.2,589.2 429.9,581.0 432.6,575.5 434.5,580.6 436.3,583.8 438.1,596.6 439.9,610.9 442.6,615.9 445.3,620.0 448.0,619.6 450.7,616.3 453.4,609.3 456.1,601.8 458.5,592.0 460.8,581.2 463.0,593.7 465.2,607.3 467.0,603.1 468.8,601.8 471.1,608.2 473.5,617.4 475.6,612.7 477.8,610.1 480.5,613.0 483.2,615.2 485.8,645.2 488.0,643.2 490.1,641.6 492.3,639.8 494.7,647.6 497.1,651.9 499.5,659.6 502.3,663.0 505.0,668.5 507.8,672.3 510.4,667.2 513.1,663.5 515.7,661.4 518.5,659.2 521.2,657.8 523.5,648.9 525.7,642.0 528.0,633.9 530.2,627.0 532.6,629.1 535.0,630.9 537.4,632.5 540.1,629.8 542.8,628.9 544.6,631.1 546.4,632.5 549.3,625.3 551.4,635.5 553.4,644.7 555.5,656.0 557.9,659.1 560.3,658.8 562.7,661.4 564.5,655.8 566.3,652.4 569.0,651.2 571.7,652.4 574.1,654.6 576.6,657.1 579.0,657.8 581.4,659.8 583.8,659.9 586.2,661.4 588.0,656.2 589.8,652.4 592.0,655.0 594.3,661.0 596.5,664.8 598.8,668.7 601.1,670.1 603.3,672.7 605.6,673.9 607.9,675.9 610.7,679.6 613.4,681.4 616.2,683.1 618.4,676.9 620.5,672.3 622.9,672.9 625.3,669.7 627.7,670.5 630.1,671.0 632.6,671.0 635.0,671.6 637.7,654.9 640.4,639.8 642.2,643.9 644.0,650.6 646.9,641.6 649.3,641.8 651.7,638.9 654.1,639.8 656.7,646.0 659.4,653.1 662.0,657.8 664.4,669.4 666.9,682.2 669.3,695.8 671.1,684.4 672.9,672.3 674.7,673.2 676.5,674.1 679.2,665.5 681.9,656.0 684.2,663.3 686.6,668.7 689.1,645.2 691.5,639.4 694.0,635.0 696.4,630.7 698.4,634.3 700.5,637.8 702.5,643.4 704.7,650.0 706.8,655.0 709.0,659.6 711.4,659.6 713.8,656.9 716.2,657.8 718.6,650.4 721.1,641.7 723.5,632.5 726.2,630.6 728.9,628.9 731.4,607.3 733.7,602.6 736.0,596.4" fill="none" stroke="#ff70c0" stroke-width="1" stroke-dasharray="2 2"/><rect x="754.5" y="51.5" width="15" height="13" fill="none" stroke="#58a8ff"/><path d="M757 58 L761 54.5 V56.5 H767 V59.5 H761 V61.5 Z" fill="none" stroke="#58a8ff"/><rect x="771.5" y="51.5" width="15" height="13" fill="none" stroke="#58a8ff"/><path d="M784 58 L780 54.5 V56.5 H774 V59.5 H780 V61.5 Z" fill="none" stroke="#58a8ff"/><path d="M108 320.5 H120 M108 320.5 L111 318 M108 320.5 L111 323" stroke="#909090" fill="none"/></svg>
<div class="a" style="left:3px;top:49px;color:#fff"><span style="font-size:12px">欧元美元</span><span style="font-family:'Liberation Mono',monospace;font-size:12px;letter-spacing:-1.2px">(EURUSD)&lt;15</span><span style="font-size:12px">分</span><span style="font-family:'Liberation Mono',monospace;font-size:12px;letter-spacing:-1.2px">&gt;</span></div>
<div class="a m" style="left:65px;top:72px;color:#a0a0a0">K</div>
<div class="a m" style="left:85px;top:72px;color:#a0a0a0">BOLL(20,2) <span style="color:#fff">MID:1.3320</span> <span style="color:#ffff00">UPPER:1.3361</span> <span style="color:#ff00ff">LOWER:1.3280</span></div>
<div class="a" style="left:24px;top:93px;color:#c0c0c0"><span style="display:inline-block;width:7px;text-align:center;font-family:'Liberation Sans',sans-serif;font-size:13px">1</span><span style="display:inline-block;width:7px;text-align:center;font-family:'Liberation Sans',sans-serif;font-size:13px">.</span><span style="display:inline-block;width:7px;text-align:center;font-family:'Liberation Sans',sans-serif;font-size:13px">3</span><span style="display:inline-block;width:7px;text-align:center;font-family:'Liberation Sans',sans-serif;font-size:13px">5</span><span style="display:inline-block;width:7px;text-align:center;font-family:'Liberation Sans',sans-serif;font-size:13px">0</span></div>
<div class="a" style="left:24px;top:162px;color:#c0c0c0"><span style="display:inline-block;width:7px;text-align:center;font-family:'Liberation Sans',sans-serif;font-size:13px">1</span><span style="display:inline-block;width:7px;text-align:center;font-family:'Liberation Sans',sans-serif;font-size:13px">.</span><span style="display:inline-block;width:7px;text-align:center;font-family:'Liberation Sans',sans-serif;font-size:13px">3</span><span style="display:inline-block;width:7px;text-align:center;font-family:'Liberation Sans',sans-serif;font-size:13px">4</span><span style="display:inline-block;width:7px;text-align:center;font-family:'Liberation Sans',sans-serif;font-size:13px">0</span></div>
<div class="a" style="left:24px;top:230px;color:#c0c0c0"><span style="display:inline-block;width:7px;text-align:center;font-family:'Liberation Sans',sans-serif;font-size:13px">1</span><span style="display:inline-block;width:7px;text-align:center;font-family:'Liberation Sans',sans-serif;font-size:13px">.</span><span style="display:inline-block;width:7px;text-align:center;font-family:'Liberation Sans',sans-serif;font-size:13px">3</span><span style="display:inline-block;width:7px;text-align:center;font-family:'Liberation Sans',sans-serif;font-size:13px">3</span><span style="display:inline-block;width:7px;text-align:center;font-family:'Liberation Sans',sans-serif;font-size:13px">0</span></div>
<div class="a" style="left:24px;top:299px;color:#c0c0c0"><span style="display:inline-block;width:7px;text-align:center;font-family:'Liberation Sans',sans-serif;font-size:13px">1</span><span style="display:inline-block;width:7px;text-align:center;font-family:'Liberation Sans',sans-serif;font-size:13px">.</span><span style="display:inline-block;width:7px;text-align:center;font-family:'Liberation Sans',sans-serif;font-size:13px">3</span><span style="display:inline-block;width:7px;text-align:center;font-family:'Liberation Sans',sans-serif;font-size:13px">2</span><span style="display:inline-block;width:7px;text-align:center;font-family:'Liberation Sans',sans-serif;font-size:13px">0</span></div>
<div class="a m" style="left:63px;top:192px;color:#d8d8d8;font-size:12px;letter-spacing:-0.8px">38.2%</div>
<div class="a m" style="left:63px;top:219px;color:#d8d8d8;font-size:12px;letter-spacing:-0.8px">50%</div>
<div class="a m" style="left:63px;top:246px;color:#d8d8d8;font-size:12px;letter-spacing:-0.8px">61.8%</div>
<div class="a s" style="left:752px;top:193px;color:#d0d0d0;font-size:11px">1.3370</div>
<div class="a s" style="left:752px;top:220px;color:#d0d0d0;font-size:11px">1.3332</div>
<div class="a s" style="left:752px;top:247px;color:#d0d0d0;font-size:11px">1.3294</div>
<div class="a m" style="left:64px;top:344px;color:#a0a0a0">BHU <span style="color:#fff"><span style="font-size:12px">股</span><span style="font-family:'Liberation Mono',monospace;font-size:12px;letter-spacing:-1.2px">:25.9360</span></span></div>
<div class="a" style="left:45px;top:365px;color:#c0c0c0"><span style="display:inline-block;width:7px;text-align:center;font-family:'Liberation Sans',sans-serif;font-size:13px">7</span><span style="display:inline-block;width:7px;text-align:center;font-family:'Liberation Sans',sans-serif;font-size:13px">0</span></div>
<div class="a" style="left:45px;top:384px;color:#c0c0c0"><span style="display:inline-block;width:7px;text-align:center;font-family:'Liberation Sans',sans-serif;font-size:13px">5</span><span style="display:inline-block;width:7px;text-align:center;font-family:'Liberation Sans',sans-serif;font-size:13px">0</span></div>
<div class="a" style="left:45px;top:403px;color:#c0c0c0"><span style="display:inline-block;width:7px;text-align:center;font-family:'Liberation Sans',sans-serif;font-size:13px">3</span><span style="display:inline-block;width:7px;text-align:center;font-family:'Liberation Sans',sans-serif;font-size:13px">0</span></div>
<div class="a m" style="left:64px;top:435px;color:#a0a0a0">MACD(26,12,9) <span style="color:#fff">DIFF:0.0497</span> <span style="color:#ffff00">DEA:-0.0268</span> <span style="color:#c0c0c0">MACD:0.1530</span></div>
<div class="a" style="left:52px;top:494px;color:#c0c0c0"><span style="display:inline-block;width:7px;text-align:center;font-family:'Liberation Sans',sans-serif;font-size:13px">0</span></div>
<div class="a m" style="left:64px;top:537px;color:#a0a0a0">RSI(14,14,14) <span style="color:#fff">RSI1:68.5872</span> <span style="color:#ffff00">RSI2:68.5872</span> <span style="color:#ff00ff">RSI3:68.5872</span></div>
<div class="a" style="left:45px;top:585px;color:#c0c0c0"><span style="display:inline-block;width:7px;text-align:center;font-family:'Liberation Sans',sans-serif;font-size:13px">7</span><span style="display:inline-block;width:7px;text-align:center;font-family:'Liberation Sans',sans-serif;font-size:13px">0</span></div>
<div class="a" style="left:45px;top:626px;color:#c0c0c0"><span style="display:inline-block;width:7px;text-align:center;font-family:'Liberation Sans',sans-serif;font-size:13px">5</span><span style="display:inline-block;width:7px;text-align:center;font-family:'Liberation Sans',sans-serif;font-size:13px">0</span></div>
<div class="a" style="left:45px;top:667px;color:#c0c0c0"><span style="display:inline-block;width:7px;text-align:center;font-family:'Liberation Sans',sans-serif;font-size:13px">3</span><span style="display:inline-block;width:7px;text-align:center;font-family:'Liberation Sans',sans-serif;font-size:13px">0</span></div>
<div class="a" style="left:34px;top:700px;color:#fff"><span style="font-family:'Liberation Sans';font-size:12px;letter-spacing:0px">15</span><span style="font-size:12px">分</span></div>
<div class="a s" style="left:65px;top:704px;color:#fff;font-size:11px">1211</div>
<div class="a s" style="left:253px;top:704px;color:#fff;font-size:11px">14</div>
<div class="a s" style="left:509px;top:704px;color:#fff;font-size:11px">15</div>
<svg class="a" style="left:0;top:0" width="1024" height="734" shape-rendering="crispEdges"><line x1="789" y1="72.5" x2="1021" y2="72.5" stroke="#e00000"/><line x1="789" y1="93.5" x2="1021" y2="93.5" stroke="#e00000"/><line x1="789" y1="114.5" x2="1021" y2="114.5" stroke="#e00000"/><line x1="789" y1="235.5" x2="1021" y2="235.5" stroke="#e00000"/><line x1="789" y1="256.5" x2="1021" y2="256.5" stroke="#e00000"/><line x1="789" y1="277.5" x2="1021" y2="277.5" stroke="#e00000"/><rect x="1004.5" y="50.5" width="15" height="13" fill="none" stroke="#58a8ff"/><rect x="1007.5" y="53.5" width="9" height="7" fill="none" stroke="#58a8ff" stroke-width="1.5"/></svg>
<div class="a" style="left:824px;top:51px;color:#f0f000"><span style="font-size:19px">欧元美元</span><span style="font-family:'Liberation Mono',monospace;font-size:17px;letter-spacing:0px">(EURUSD)</span></div>
<div class="a" style="left:793px;top:75px;font-size:13px;letter-spacing:-1px;color:#fff">卖出</div>
<div class="a s" style="right:129px;top:77px;font-size:13px;color:#00e000">1.3375</div>
<div class="a s" style="right:8px;top:77px;font-size:13px;color:#f0f000">0</div>
<div class="a" style="left:793px;top:96px;font-size:13px;letter-spacing:-1px;color:#fff">买入</div>
<div class="a s" style="right:129px;top:98px;font-size:13px;color:#00e000">1.3369</div>
<div class="a s" style="right:8px;top:98px;font-size:13px;color:#f0f000">0</div>
<div class="a" style="left:793px;top:117px;font-size:13px;letter-spacing:-1px;color:#fff">最新</div>
<div class="a s" style="right:129px;top:119px;font-size:13px;color:#00e000">1.3369</div>
<div class="a" style="left:914px;top:117px;font-size:13px;letter-spacing:-1px;color:#fff">均价</div>
<div class="a s" style="right:8px;top:119px;font-size:13px;color:#e8e8e8">0.0000</div>
<div class="a" style="left:793px;top:137px;font-size:13px;letter-spacing:-1px;color:#fff">涨跌</div>
<div class="a s" style="right:129px;top:139px;font-size:13px;color:#00e000">-0.0008</div>
<div class="a" style="left:914px;top:137px;font-size:13px;letter-spacing:-1px;color:#fff">昨收</div>
<div class="a s" style="right:8px;top:139px;font-size:13px;color:#e8e8e8">1.3377</div>
<div class="a" style="left:793px;top:157px;font-size:13px;letter-spacing:-1px;color:#fff">幅度</div>
<div class="a s" style="right:129px;top:159px;font-size:13px;color:#00e000">-0.06%</div>
<div class="a" style="left:914px;top:157px;font-size:13px;letter-spacing:-1px;color:#fff">开盘</div>
<div class="a s" style="right:8px;top:159px;font-size:13px;color:#e8e8e8">1.3377</div>
<div class="a" style="left:793px;top:177px;font-size:13px;letter-spacing:-1px;color:#fff">总手</div>
<div class="a s" style="right:129px;top:179px;font-size:13px;color:#f0f000">0</div>
<div class="a" style="left:914px;top:177px;font-size:13px;letter-spacing:-1px;color:#fff">最高</div>
<div class="a s" style="right:8px;top:179px;font-size:13px;color:#ff3030">1.3381</div>
<div class="a" style="left:793px;top:197px;font-size:13px;letter-spacing:-1px;color:#fff">现手</div>
<div class="a s" style="right:129px;top:199px;font-size:13px;color:#f0f000">0</div>
<div class="a" style="left:914px;top:197px;font-size:13px;letter-spacing:-1px;color:#fff">最低</div>
<div class="a s" style="right:8px;top:199px;font-size:13px;color:#00e000">1.3285</div>
<div class="a" style="left:793px;top:217px;font-size:13px;letter-spacing:-1px;color:#fff">金额</div>
<div class="a s" style="right:129px;top:219px;font-size:13px;color:#f0f000">0.00</div>
<div class="a" style="left:914px;top:217px;font-size:13px;letter-spacing:-1px;color:#fff">量比</div>
<div class="a s" style="right:8px;top:219px;font-size:13px;color:#e8e8e8">1.000</div>
<div class="a" style="left:793px;top:239px;font-size:13px;letter-spacing:-1px;color:#fff">委比</div>
<div class="a s" style="right:8px;top:241px;font-size:13px;color:#e8e8e8">0</div>
<div class="a" style="left:793px;top:260px;font-size:13px;letter-spacing:-1px;color:#fff">外盘</div>
<div class="a" style="left:916px;top:260px;font-size:13px;letter-spacing:-1px;color:#fff">内盘</div>
<div class="a s" style="right:8px;top:262px;font-size:13px;color:#00e000">---</div>
<div class="a" style="left:793px;top:281px;font-size:13px;letter-spacing:-1px;color:#909090">北京</div>
<div class="a" style="left:973px;top:281px;font-size:13px;letter-spacing:-1px;color:#909090">现手</div>
<div class="a s" style="left:794px;top:304px;font-size:13.5px;color:#e8e8e8">20:36</div>
<div class="a s" style="right:24px;top:305px;font-size:13px;color:#ff3030">0</div>
<div class="a s" style="left:794px;top:326px;font-size:13.5px;color:#e8e8e8">20:36</div>
<div class="a s" style="right:24px;top:327px;font-size:13px;color:#ff3030">0</div>
<div class="a s" style="left:794px;top:348px;font-size:13.5px;color:#e8e8e8">20:36</div>
<div class="a s" style="right:24px;top:349px;font-size:13px;color:#ff3030">0</div>
<div class="a s" style="left:794px;top:370px;font-size:13.5px;color:#e8e8e8">20:36</div>
<div class="a s" style="right:24px;top:371px;font-size:13px;color:#ff3030">0</div>
<div class="a s" style="left:794px;top:392px;font-size:13.5px;color:#e8e8e8">20:36</div>
<div class="a s" style="right:24px;top:393px;font-size:13px;color:#ff3030">0</div>
<div class="a s" style="left:794px;top:414px;font-size:13.5px;color:#e8e8e8">20:36</div>
<div class="a s" style="right:24px;top:415px;font-size:13px;color:#ff3030">0</div>
<div class="a s" style="left:794px;top:436px;font-size:13.5px;color:#e8e8e8">20:36</div>
<div class="a s" style="right:24px;top:437px;font-size:13px;color:#ff3030">0</div>
<div class="a s" style="left:794px;top:458px;font-size:13.5px;color:#e8e8e8">20:36</div>
<div class="a s" style="right:24px;top:459px;font-size:13px;color:#ff3030">0</div>
<div class="a s" style="left:794px;top:480px;font-size:13.5px;color:#e8e8e8">20:36</div>
<div class="a s" style="right:24px;top:481px;font-size:13px;color:#ff3030">0</div>
<div class="a s" style="left:794px;top:502px;font-size:13.5px;color:#e8e8e8">20:36</div>
<div class="a s" style="right:24px;top:503px;font-size:13px;color:#ff3030">0</div>
<div class="a s" style="left:794px;top:524px;font-size:13.5px;color:#e8e8e8">20:36</div>
<div class="a s" style="right:107px;top:525px;font-size:13px;color:#00e000">1.3369</div>
<div class="a s" style="right:24px;top:525px;font-size:13px;color:#ff3030">0</div>
<div class="a s" style="left:794px;top:546px;font-size:13.5px;color:#e8e8e8">20:36</div>
<div class="a s" style="right:107px;top:547px;font-size:13px;color:#00e000">1.3368</div>
<div class="a s" style="right:24px;top:547px;font-size:13px;color:#ff3030">0</div>
<div class="a s" style="left:794px;top:568px;font-size:13.5px;color:#e8e8e8">20:36</div>
<div class="a s" style="right:107px;top:569px;font-size:13px;color:#00e000">1.3367</div>
<div class="a s" style="right:24px;top:569px;font-size:13px;color:#ff3030">0</div>
<div class="a s" style="left:794px;top:590px;font-size:13.5px;color:#e8e8e8">20:36</div>
<div class="a s" style="right:107px;top:591px;font-size:13px;color:#00e000">1.3368</div>
<div class="a s" style="right:24px;top:591px;font-size:13px;color:#ff3030">0</div>
<div class="a s" style="left:794px;top:612px;font-size:13.5px;color:#e8e8e8">20:36</div>
<div class="a s" style="right:107px;top:613px;font-size:13px;color:#00e000">1.3369</div>
<div class="a s" style="right:24px;top:613px;font-size:13px;color:#ff3030">0</div>
<div class="a s" style="left:794px;top:634px;font-size:13.5px;color:#e8e8e8">20:37</div>
<div class="a s" style="right:107px;top:635px;font-size:13px;color:#00e000">1.3368</div>
<div class="a s" style="right:24px;top:635px;font-size:13px;color:#ff3030">0</div>
<div class="a s" style="left:794px;top:656px;font-size:13.5px;color:#e8e8e8">20:37</div>
<div class="a s" style="right:107px;top:657px;font-size:13px;color:#00e000">1.3370</div>
<div class="a s" style="right:24px;top:657px;font-size:13px;color:#ff3030">0</div>
<div class="a s" style="left:794px;top:678px;font-size:13.5px;color:#e8e8e8">20:37</div>
<div class="a s" style="right:107px;top:679px;font-size:13px;color:#00e000">1.3369</div>
<div class="a s" style="right:24px;top:679px;font-size:13px;color:#ff3030">0</div>
<div class="a" style="left:1004px;top:277px;width:17px;height:418px;background:#f8f8f8;background-image:radial-gradient(circle,#c0c0c0 0.5px,transparent 0.8px);background-size:4px 4px"></div>
<svg class="a" style="left:1004px;top:277px" width="17" height="418"><rect x="1.5" y="1.5" width="15" height="15" rx="2" fill="#c8d4f8" stroke="#fff"/><path d="M4.5 11 L9 6.5 L13.5 11" fill="none" stroke="#4d6185" stroke-width="2"/><rect x="1.5" y="385.5" width="15" height="15" rx="2" fill="#c8d4f8" stroke="#fff"/><path d="M5 388.5 H13 M5 390.5 H13 M5 392.5 H13 M5 394.5 H13 M5 396.5 H13" stroke="#7088c0"/><rect x="1.5" y="402" width="15" height="15" rx="2" fill="#c8d4f8" stroke="#fff"/><path d="M4.5 407 L9 411.5 L13.5 407" fill="none" stroke="#4d6185" stroke-width="2"/></svg>
<div class="a" style="left:834px;top:238px;width:83px;height:283px;background:conic-gradient(from 90deg at 1px 1px,#6a70e0 0 25%,#8c8cf8 0 75%,#7088e8 0) 0 0/2px 2px"></div>
<div class="a" style="left:835px;top:239px;width:80px;height:20px;background:conic-gradient(from 90deg at 1px 1px,#68a0d8 0 25%,#9090f8 0 50%,#68a0d8 0 75%,#8c8cf0 0) 0 0/2px 2px"></div>
<div class="a" style="left:837px;top:259px;width:77px;height:259px;background:conic-gradient(from 90deg at 1px 1px,#d8d8d8 0 25%,#fffcd0 0 50%,#ffffff 0 75%,#fffcd0 0) 0 0/2px 2px"></div>
<svg class="a" style="left:834px;top:238px" width="83" height="283"><rect x="65.5" y="5.5" width="12" height="12" rx="1.5" fill="#b06080" stroke="#e0e0f8" stroke-width="1"/><path d="M68.5 8.5 L74.5 14.5 M74.5 8.5 L68.5 14.5" stroke="#fff" stroke-width="2.2"/><g transform="translate(16,34)"><path d="M-6 -6 L5 5" stroke="#000" stroke-width="1.2"/></g><g transform="translate(42,34)"><path d="M-5 -5 L5 5" stroke="#000" stroke-width="1.2"/><circle cx="-5" cy="-5" r="1.2"/><circle cx="5" cy="5" r="1.2"/></g><g transform="translate(68,34)"><path d="M-5 -2 L2 5 M-2 -5 L5 2" stroke="#000" stroke-width="1.2"/></g><g transform="translate(16,60)"><path d="M-7 0 H6 M-7 -2 V2" stroke="#000" stroke-width="1.2"/></g><g transform="translate(42,60)"><path d="M0 -7 V6 M-2 -7 H2" stroke="#000" stroke-width="1.2"/></g><g transform="translate(68,60)"><rect x="-5" y="-4" width="10" height="8" fill="none" stroke="#000" stroke-width="1.2"/></g><g transform="translate(16,86)"><path d="M-6 6 L5 -5" stroke="#000" stroke-width="1.2"/><circle cx="-6" cy="6" r="1.2"/></g><g transform="translate(42,86)"><path d="M-5 -5 L5 5" stroke="#000" stroke-width="1.2"/><circle cx="-5" cy="-5" r="1.2"/></g><g transform="translate(68,86)"><path d="M-4 4 Q-4 -6 0 -2 Q3 2 3 -6" fill="none" stroke="#000" stroke-width="1.2"/></g><g transform="translate(16,111)"><path d="M-5 -5 H1 Q5 -5 5 0 Q5 5 1 5 H-5" fill="none" stroke="#000" stroke-width="1.2"/></g><g transform="translate(42,111)"><path d="M6 -6 L-6 5 H6 M0 0 Q3 2 2 5" fill="none" stroke="#1040a0" stroke-width="1.2"/></g><g transform="translate(68,111)"><path d="M-6 -7 V5 H6 M-6 5 L5 -6 M-6 5 L6 -2 M-6 5 L1 -7 M-6 5 L6 2" fill="none" stroke="#1040a0" stroke-width="1"/></g><g transform="translate(16,137)"><path d="M-6 -6 H6 M-6 -3 H6 M-6 0 H6 M-6 3 H6 M-6 6 H6" stroke="#1850b0" stroke-width="1.2"/><rect x="-6" y="-4" width="5" height="5" fill="#1850b0"/></g><g transform="translate(42,137)"><path d="M-6 -6 H6 M-6 -3 H6 M-6 0 H6 M-6 3 H6 M-6 6 H6" stroke="#1850b0" stroke-width="1.2"/><rect x="-6" y="-4" width="5" height="5" fill="#1850b0"/></g><g transform="translate(68,137)"><path d="M-6 -6 H6 M-6 -3 H6 M-6 0 H6 M-6 3 H6 M-6 6 H6" stroke="#1850b0" stroke-width="1.2"/><rect x="-6" y="-4" width="5" height="5" fill="#1850b0"/></g><g transform="translate(16,164)"><path d="M-5 -6 V6 M-2 -6 V6 M1 -6 V6 M4 -6 V6" stroke="#1040a0" stroke-width="1.2"/></g><g transform="translate(42,164)"><path d="M-6 -6 V6 M-3 -6 V6 M0 -6 V6 M3 -6 V6 M6 -6 V6" stroke="#1040a0" stroke-width="1.2"/></g><g transform="translate(68,164)"><path d="M-5 -7 V6 M-5 -2 L5 -6 M-5 3 L5 -1 M5 -7 V6" fill="none" stroke="#1040a0" stroke-width="1.2"/></g><g transform="translate(16,190)"><path d="M-5 -7 V6 M-5 -2 L5 -6 M-5 3 L5 -1" fill="none" stroke="#1040a0" stroke-width="1.2"/></g><g transform="translate(42,190)"><path d="M-6 7 L0 -7 L6 7 M-3 2 H3" fill="none" stroke="#1040a0" stroke-width="1.4"/></g><g transform="translate(68,190)"><circle cx="0" cy="0" r="7" fill="#e8e8f8" stroke="#3050c0" stroke-width="1.5"/><circle cx="0" cy="0" r="4" fill="none" stroke="#e02020" stroke-width="1.5"/></g><g transform="translate(16,216)"><path d="M0 -6 L-5 0 H-2 V5 H2 V0 H5 Z" fill="#e83010" stroke="#000" stroke-width=".6"/></g><g transform="translate(42,216)"><path d="M5 -5 L-1 -5 L1 -3 L-5 3 L-3 5 L3 -1 L5 1 Z" fill="#f01010" stroke="#000" stroke-width=".6"/></g><g transform="translate(68,216)"><path d="M-5 -5 L1 -5 L-1 -3 L5 3 L3 5 L-3 -1 L-5 1 Z" fill="#f01010" stroke="#000" stroke-width=".6"/></g><g transform="translate(16,242)"><path d="M0 6 L-5 0 H-2 V-5 H2 V0 H5 Z" fill="#50b030" stroke="#000" stroke-width=".6"/></g><g transform="translate(42,242)"><path d="M5 5 L-1 5 L1 3 L-5 -3 L-3 -5 L3 1 L5 -1 Z" fill="#50b030" stroke="#000" stroke-width=".6"/></g><g transform="translate(68,242)"><path d="M-5 5 L1 5 L-1 3 L5 -3 L3 -5 L-3 1 L-5 -1 Z" fill="#50b030" stroke="#000" stroke-width=".6"/></g><g transform="translate(16,268)"><path d="M-7 3 L0 -4 H7 L0 3 Z" fill="#f8e020" stroke="#000" stroke-width=".8"/><path d="M-7 3 V5 H0 L7 -2 V-4" fill="#c0a000" stroke="#000" stroke-width=".6"/></g><g transform="translate(55,268)"><path d="M-4 -3 H2 M-4 -3 L-1 -6 M-4 -3 L-1 0" stroke="#2050c0" stroke-width="2" fill="none"/><rect x="-6" y="3" width="6" height="3" fill="#f03020"/><rect x="1" y="-2" width="4" height="3" fill="#f03020"/><path d="M6 -7 H9 M6 -3 H9 M6 1 H9 M6 5 H9" stroke="#000" stroke-width="1.4"/></g></svg>
<div class="a" style="left:837px;top:244px;font-size:12px;color:#fff;font-weight:bold">画线</div>
<div class="a" style="left:0;top:718px;width:1024px;height:16px;background:conic-gradient(from 90deg at 1px 1px,#cccccc 0 25%,#ccccff 0 75%,#ccffee 0) 0 0/2px 2px;border-top:1px solid #000;border-bottom:1px solid #7070a8"></div>
<div class="a" style="left:365px;top:719px;width:2px;height:15px;border-left:1px solid #909090;border-right:1px solid #fff"></div>
<div class="a" style="left:2px;top:718px;font-size:13px;letter-spacing:-0.4px;color:#0000f0;font-weight:bold">沪</div>
<div class="a" style="left:24px;top:718px;font-size:13px;letter-spacing:-0.4px;color:#108010;font-weight:bold">2911.41</div>
<div class="a" style="left:86px;top:718px;font-size:13px;letter-spacing:-0.4px;color:#108010;font-weight:bold">-15.66</div>
<div class="a" style="left:124px;top:718px;font-size:13px;letter-spacing:-0.4px;color:#000;font-weight:bold">1447.7亿</div>
<div class="a" style="left:188px;top:718px;font-size:13px;letter-spacing:-0.4px;color:#0000f0;font-weight:bold">深</div>
<div class="a" style="left:206px;top:718px;font-size:13px;letter-spacing:-0.4px;color:#108010;font-weight:bold">12829.36</div>
<div class="a" style="left:274px;top:718px;font-size:13px;letter-spacing:-0.4px;color:#108010;font-weight:bold">-97.25</div>
<div class="a" style="left:312px;top:718px;font-size:13px;letter-spacing:-0.4px;color:#000;font-weight:bold">1310.4亿</div>
<div class="a" style="left:488px;top:720px;font-size:12px;color:#000">〖能源化工〗马来西亚棕榈油12月15日现货价格</div>
<div class="a" style="left:870px;top:713px;width:152px;height:20px;background:#eceef8;border:1px solid #a0b0e0;border-radius:4px;box-shadow:inset 0 0 0 1px #fff"></div>
<svg class="a" style="left:870px;top:713px" width="152" height="20"><path d="M10 5 V14 M6 10 L10 14 L14 10" stroke="#20a020" stroke-width="2" fill="none"/><path d="M85 15 V6 M81 10 L85 6 L89 10" stroke="#f09000" stroke-width="2" fill="none"/><line x1="75.5" y1="4" x2="75.5" y2="16" stroke="#c0c8e0"/></svg>
<div class="a" style="left:901px;top:718px;font-size:11px;color:#000">0.1KB/S</div>
<div class="a" style="left:985px;top:718px;font-size:11px;color:#000">0KB/S</div></body></html>
